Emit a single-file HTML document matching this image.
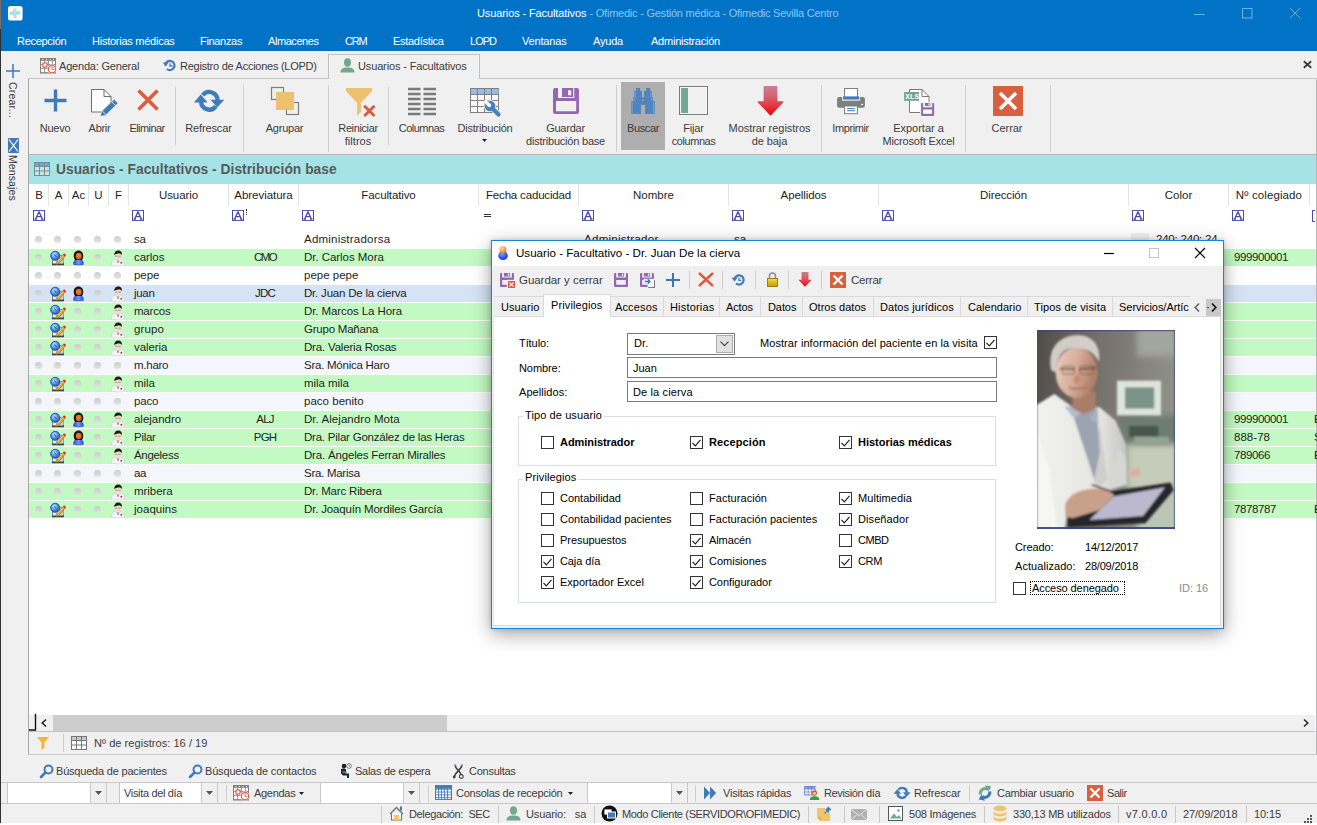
<!DOCTYPE html>
<html><head><meta charset="utf-8"><title>Usuarios - Facultativos</title>
<style>
*{box-sizing:border-box;margin:0;padding:0}
html,body{width:1317px;height:825px;overflow:hidden;background:#fff}
body{font-family:"Liberation Sans",sans-serif;font-size:11px;color:#3c3c3c;position:relative;letter-spacing:-0.2px}
.a{position:absolute;white-space:nowrap}
.c{position:absolute;white-space:nowrap;text-align:center;transform:translateX(-50%)}
svg{position:absolute;overflow:visible}
#title{left:0;top:0;width:1317px;height:51px;background:#0173c7}
.menu{color:#fff;top:35px;font-size:11px;line-height:13px}
#side{left:0;top:51px;width:28px;height:772px;background:#f0f0f0}
#main{left:28px;top:51px;width:1289px;height:772px;background:#f0f0f0}
.tl{top:122px;line-height:13px;font-size:11px;color:#3c3c3c}
.gsep{width:1px;background:#d0d0d0;top:85px;height:67px}
.isep{width:1px;background:#d0d0d0;top:87px;height:58px}
.g{font-size:11.5px;letter-spacing:0.1px;color:#1e1e1e;line-height:18px}
.hd{font-size:11.5px;letter-spacing:0.1px;color:#1e1e1e;top:189px;line-height:13px}
.row{left:29px;width:1287px;height:17px}
.d{font-size:11px;letter-spacing:0.080px;color:#000;line-height:13px}
.cb{width:13px;height:13px;border:1px solid #333;background:#fff}
.sb{top:808px;line-height:13px;color:#3c3c3c}
.ssep{width:1px;background:#c8c8c8;top:806px;height:17px}
.bt{top:787px;line-height:13px;color:#3c3c3c}
</style></head><body>
<!-- title bar -->
<div class="a" id="title"></div>
<div class="a" style="left:0;top:0;width:1px;height:29px;background:#7a6c62"></div>
<svg style="left:7.700px;top:5.500px" width="14.600" height="14.600" viewBox="0 0 14.600 14.600"><rect width="14.600" height="14.600" rx="2.600" fill="#fff"/><path d="M5.400 2.600h3.100v3h3.300v3.100H8.500v3.300H5.400V8.700H2.100V5.600h3.300z" fill="#9adbd6"/><path d="M5.400 4.100h3.100M5.400 5.600h3.100M5.400 7.200h3.100M5.400 8.700h3.100M5.400 10.300h3.100M6.900 2.600v9.400M3.600 5.600v3.100M10.200 5.600v3.100" stroke="#d4f0ee" stroke-width="0.500"/><rect x="11.300" y="4.600" width="0.900" height="1.500" fill="#7fcfca"/></svg>
<div class="a" style="left:477px;top:7px;color:#fff;font-size:11px;line-height:13px;letter-spacing:-0.11px">Usuarios - Facultativos</div>
<div class="a" style="left:589.500px;top:7px;color:#8fc6f0;font-size:11px;line-height:13px;letter-spacing:-0.23px">- Ofimedic - Gestión médica - Ofimedic Sevilla Centro</div>
<svg style="left:1194px;top:8px" width="112" height="12" viewBox="0 0 112 12"><path d="M0 6.500h10.500" stroke="#6fb2ea" stroke-width="1"/><rect x="48.500" y="0.500" width="9.500" height="9.500" fill="none" stroke="#6fb2ea"/><path d="M96 0l10.300 10.300M106.300 0l-10.300 10.300" stroke="#6fb2ea" stroke-width="1"/></svg>
<!-- menu -->
<div class="a menu" style="left:17px;letter-spacing:-0.29px">Recepción</div>
<div class="a menu" style="left:92px;letter-spacing:-0.25px">Historias médicas</div>
<div class="a menu" style="left:200px;letter-spacing:-0.32px">Finanzas</div>
<div class="a menu" style="left:268px;letter-spacing:-0.43px">Almacenes</div>
<div class="a menu" style="left:345px;letter-spacing:-1.18px">CRM</div>
<div class="a menu" style="left:393px;letter-spacing:-0.29px">Estadística</div>
<div class="a menu" style="left:470px;letter-spacing:-0.99px">LOPD</div>
<div class="a menu" style="left:522px;letter-spacing:-0.17px">Ventanas</div>
<div class="a menu" style="left:593px;letter-spacing:-0.2px">Ayuda</div>
<div class="a menu" style="left:651px;letter-spacing:-0.23px">Administración</div>
<!-- sidebar + main bg -->
<div class="a" id="side"></div>
<div class="a" id="main"></div>
<div class="a" style="left:0;top:29px;width:1px;height:794px;background:#303030"></div>
<div class="a" style="left:28px;top:78px;width:1px;height:676px;background:#a6a6a6"></div>
<svg style="left:6px;top:64px" width="14" height="14" viewBox="0 0 14 14"><path d="M7 0v14M0 7h14" stroke="#3d79b8" stroke-width="1.500"/></svg>
<div class="a" style="left:20px;top:82px;transform-origin:0 0;transform:rotate(90deg);font-size:10.500px;letter-spacing:0.200px;line-height:14px;color:#3c3c3c">Crear...</div>
<svg style="left:8px;top:138px" width="11" height="15" viewBox="0 0 11 15"><rect width="11" height="15" rx="0.800" fill="#4179b6"/><path d="M1 1.500l9 12M10 1.500l-9 12" stroke="#fff" stroke-width="1.200"/></svg>
<div class="a" style="left:20px;top:155px;transform-origin:0 0;transform:rotate(90deg);font-size:10.500px;letter-spacing:0.100px;line-height:14px;color:#3c3c3c">Mensajes</div>
<!-- doc tabs -->
<div class="a" style="left:1316px;top:78px;width:1px;height:76px;background:#b8b8b8"></div>
<div class="a" style="left:28px;top:78px;width:1289px;height:1px;background:#c6c6c6"></div>
<div class="a" style="left:328px;top:54px;width:152px;height:25px;background:#f0f0f0;border:1px solid #c2c2c2;border-bottom:none"></div>
<div class="a" style="left:59px;top:60px;line-height:13px;letter-spacing:-0.2px">Agenda: General</div>
<div class="a" style="left:180px;top:60px;line-height:13px;letter-spacing:-0.26px">Registro de Acciones (LOPD)</div>
<div class="a" style="left:358px;top:60px;line-height:13px;letter-spacing:-0.14px">Usuarios - Facultativos</div>
<svg style="left:1303px;top:61px" width="9" height="7" viewBox="0 0 9 7"><path d="M0.800 0.300l7.400 6.400M8.200 0.300l-7.400 6.400" stroke="#3a3a3a" stroke-width="1.800"/></svg>
<!-- toolbar separators -->
<div class="a isep" style="left:175px"></div>
<div class="a gsep" style="left:243px"></div>
<div class="a gsep" style="left:328px"></div>
<div class="a isep" style="left:388px"></div>
<div class="a gsep" style="left:616px"></div>
<div class="a gsep" style="left:821px"></div>
<div class="a gsep" style="left:965px"></div>
<div class="a gsep" style="left:1050px"></div>
<!-- Buscar pressed bg -->
<div class="a" style="left:621px;top:82px;width:44px;height:68px;background:#aeaeae"></div>
<!-- labels -->
<div class="c tl" style="left:55px;top:122px;letter-spacing:-0.24px">Nuevo</div>
<div class="c tl" style="left:99.500px;top:122px;letter-spacing:-0.28px">Abrir</div>
<div class="c tl" style="left:147px;top:122px;letter-spacing:-0.58px">Eliminar</div>
<div class="c tl" style="left:208.500px;top:122px;letter-spacing:-0.14px">Refrescar</div>
<div class="c tl" style="left:284.500px;top:122px;letter-spacing:-0.22px">Agrupar</div>
<div class="c tl" style="left:358px;top:122px;letter-spacing:-0.38px">Reiniciar</div>
<div class="c tl" style="left:358px;top:135px;letter-spacing:0.06px">filtros</div>
<div class="c tl" style="left:421.500px;top:122px;letter-spacing:-0.49px">Columnas</div>
<div class="c tl" style="left:485px;top:122px;letter-spacing:-0.2px">Distribución</div>
<svg style="left:482px;top:139px" width="5" height="3" viewBox="0 0 5 3"><path d="M0 0h5L2.500 3z" fill="#222"/></svg>
<div class="c tl" style="left:565.500px;top:122px;letter-spacing:-0.24px">Guardar</div>
<div class="c tl" style="left:565.500px;top:135px;letter-spacing:-0.21px">distribución base</div>
<div class="c tl" style="left:643px;top:122px;letter-spacing:-0.39px">Buscar</div>
<div class="c tl" style="left:693.500px;top:122px;letter-spacing:-0.17px">Fijar</div>
<div class="c tl" style="left:693.500px;top:135px;letter-spacing:-0.42px">columnas</div>
<div class="c tl" style="left:769.500px;top:122px;letter-spacing:-0.03px">Mostrar registros</div>
<div class="c tl" style="left:769.500px;top:135px;letter-spacing:-0.09px">de baja</div>
<div class="c tl" style="left:850.500px;top:122px;letter-spacing:-0.41px">Imprimir</div>
<div class="c tl" style="left:918.500px;top:122px;letter-spacing:0.0px">Exportar a</div>
<div class="c tl" style="left:918.500px;top:135px;letter-spacing:-0.16px">Microsoft Excel</div>
<div class="c tl" style="left:1007px;top:122px;letter-spacing:-0.06px">Cerrar</div>
<!-- icons -->
<!-- Nuevo -->
<svg style="left:44px;top:89px" width="23" height="23" viewBox="0 0 23 23"><path d="M11.500 0.500v22M0.500 11.500h22" stroke="#3f7ab9" stroke-width="3.400"/></svg>
<!-- Abrir -->
<svg style="left:90px;top:88px" width="28" height="29" viewBox="0 0 28 29"><path d="M1.500 1.500h12.500l7 7v6.500l-9.500 9h-10z" fill="#fff" stroke="#6e6e6e" stroke-width="1"/><path d="M14 1.500v7h7" fill="none" stroke="#6e6e6e" stroke-width="1"/><path d="M10.300 28.300l1.300-4.700 12.600-12.300 3.800 3.900-12.600 12.300z" fill="#3f7ab9" stroke="#f0f0f0" stroke-width="0.600"/><path d="M21.800 13.700l3.800 3.900M12.300 23l3.800 3.900" stroke="#f0f0f0" stroke-width="0.900"/></svg>
<!-- Eliminar -->
<svg style="left:137px;top:89px" width="22" height="22" viewBox="0 0 22 22"><path d="M1.500 1.500l19 19M20.500 1.500l-19 19" stroke="#dc5c3d" stroke-width="3.600"/></svg>
<!-- Refrescar -->
<svg style="left:193px;top:89px" width="32" height="24" viewBox="0 0 32 24"><path d="M9.800 6.200A8.200 8.200 0 0 1 24.500 11.300" fill="none" stroke="#3f7ab9" stroke-width="4.300"/><path d="M22.800 17.400A8.200 8.200 0 0 1 8.100 12.300" fill="none" stroke="#3f7ab9" stroke-width="4.300"/><path d="M17.500 10.700h13.800l-7 7.900z" fill="#3f7ab9"/><path d="M0.900 13.500h13.700L7.700 5.500z" fill="#3f7ab9"/></svg>
<!-- Agrupar -->
<svg style="left:271px;top:87px" width="29" height="28" viewBox="0 0 29 28"><rect x="0.500" y="0.500" width="12" height="12" fill="#f0f0f0" stroke="#7d7d7d" stroke-width="1.200"/><rect x="15.500" y="15.500" width="12" height="12" fill="#f0f0f0" stroke="#7d7d7d" stroke-width="1.200"/><rect x="5" y="5" width="18" height="18" fill="#eec16e"/></svg>
<!-- Reiniciar filtros -->
<svg style="left:345px;top:88px" width="31" height="29" viewBox="0 0 31 29"><path d="M0.900 0H27.100V3.100L15.900 15V24L12.100 27.700V15L0.900 3.100z" fill="#eec16e"/><path d="M19.200 17.700l10.300 10.300M29.500 17.700l-10.300 10.300" stroke="#dc5c3d" stroke-width="2.900"/></svg>
<!-- Columnas -->
<svg style="left:408px;top:88px" width="28" height="27" viewBox="0 0 28 27"><path d="M0 1h12.500M0 6h12.500M0 11h12.500M0 16h12.500M0 21h12.500M0 26h12.500M15.500 1H28M15.500 6H28M15.500 11H28M15.500 16H28M15.500 21H28M15.500 26H28" stroke="#7a7a7a" stroke-width="2.500"/></svg>
<!-- Distribucion -->
<svg style="left:470px;top:88px" width="32" height="30" viewBox="0 0 32 30"><rect x="0.500" y="0.500" width="28" height="24" fill="#fafafa" stroke="#808080"/><rect x="1" y="1" width="27.500" height="5.300" fill="#9dbbdc"/><path d="M0.500 6.500h28M0.500 12.500h28M0.500 18.500h28M7.500 0.500v24M14.500 0.500v24M21.500 0.500v24" stroke="#808080" stroke-width="1" fill="none"/>
<g stroke="#f0f0f0" stroke-width="1.600" fill="#f0f0f0"><circle cx="20" cy="18" r="5.300"/><path d="M21 19l7.500 7.500" stroke-width="5.800" stroke-linecap="round"/></g>
<circle cx="20" cy="18" r="5.300" fill="#4a80bb"/><path d="M21 19l7.500 7.500" stroke="#4a80bb" stroke-width="4.200" stroke-linecap="round"/><path d="M19.600 17.600L14.500 12.500" stroke="#f6f6f6" stroke-width="3.600"/><circle cx="19.300" cy="17.400" r="1.800" fill="#f6f6f6"/></svg>
<!-- Guardar distribucion base -->
<svg style="left:553px;top:88px" width="26" height="26" viewBox="0 0 26 26"><rect width="26" height="26" rx="2.200" fill="#9467b2"/><path d="M5 0h4v9h11.200V0h1.100v10H5zM3 13h20.200v10.200H3zM15 2.200h3.200v5H15z" fill="#f0f0f0"/></svg>
<!-- Buscar (binoculars) -->
<svg style="left:631px;top:88px" width="24" height="26" viewBox="0 0 24 26"><g fill="#4f84bd"><rect x="5.100" y="0" width="4" height="3.200"/><rect x="3.200" y="3" width="7.800" height="6.400"/><rect x="2.100" y="9.200" width="9.700" height="4"/><rect x="0.200" y="13" width="9.700" height="12.900"/><rect x="15" y="0" width="4.100" height="3.200"/><rect x="13.100" y="3" width="7.800" height="6.400"/><rect x="12.300" y="9.200" width="9.700" height="4"/><rect x="14.100" y="13" width="9.700" height="12.900"/><rect x="9.500" y="10" width="5" height="6.800"/></g><path d="M4.300 4v5M3.200 10v3M1.300 14v11M19.800 4v5M20.900 10v3M22.700 14v11" stroke="#9ab8dc" stroke-width="0.600"/><rect x="11" y="11.800" width="2" height="1" fill="#aeaeae"/></svg>
<!-- Fijar columnas -->
<svg style="left:679px;top:86px" width="29" height="29" viewBox="0 0 29 29"><rect x="0.500" y="0.500" width="28" height="28" fill="#fff" stroke="#7a7a7a"/><rect x="1.500" y="1.500" width="26" height="26" fill="#f0f0f0"/><rect x="2.100" y="2" width="6.900" height="25" fill="#76a796"/></svg>
<!-- Mostrar registros de baja -->
<svg style="left:756.500px;top:86px" width="27" height="30" viewBox="0 0 27 30"><defs><linearGradient id="rg" x1="0" y1="0" x2="0" y2="1"><stop offset="0" stop-color="#c8808f"/><stop offset="0.350" stop-color="#d8606e"/><stop offset="0.620" stop-color="#e3404a"/><stop offset="1" stop-color="#f00505"/></linearGradient></defs><path d="M7.300 0.800h12.400v15.200h6L13.500 28.700 1.300 16h6z" fill="url(#rg)" stroke="url(#rg)" stroke-width="1.400" stroke-linejoin="round"/></svg>
<!-- Imprimir -->
<svg style="left:836px;top:87px" width="30" height="28" viewBox="0 0 30 28"><rect x="1.100" y="10" width="27.800" height="10.700" rx="2" fill="#7f7f7f"/><rect x="6.100" y="9.500" width="18" height="4.200" fill="#f0f0f0"/><rect x="8.500" y="1.500" width="13" height="9.500" fill="#fff" stroke="#7f7f7f"/><rect x="7.100" y="9.400" width="16" height="3.100" fill="#3f7ab9"/><rect x="8.500" y="19" width="13" height="7.700" fill="#fff" stroke="#7f7f7f"/><path d="M11.100 21.600h7.800M11.100 23.700h7.800" stroke="#3f7ab9" stroke-width="1"/><rect x="25.100" y="16.900" width="2" height="1.100" fill="#fff"/></svg>
<!-- Exportar Excel -->
<svg style="left:903px;top:88px" width="32" height="29" viewBox="0 0 32 29"><path d="M6.500 1.500h12.500l7 7v16h-19.500z" fill="#fff" stroke="#7a7a7a"/><path d="M19 1.500v7h7" fill="none" stroke="#7a7a7a"/><rect x="1.100" y="4" width="14.900" height="8.800" fill="#6fa58f"/><text x="2.300" y="11.200" font-family="Liberation Mono,monospace" font-size="7.600" font-weight="bold" fill="#fff" letter-spacing="0">XLS</text><rect x="17.100" y="13.900" width="15" height="15" fill="#f0f0f0"/><g transform="translate(18.100,14.900) scale(0.930)"><rect width="14" height="14" rx="1" fill="#9467b2"/><path d="M2.200 0h1.800v3.400h6.100V0h1.800v4.600H2.200zM2.200 7h9.600v4.700H2.200zM7.900 0.600h1.300v2.200H7.900z" fill="#fff"/></g></svg>
<!-- Cerrar -->
<svg style="left:993px;top:86px" width="30" height="30" viewBox="0 0 30 30"><rect width="30" height="30" fill="#d9603f"/><path d="M7 7l16 16M23 7l-16 16" stroke="#fff" stroke-width="3.600"/></svg>
<!-- doc tab icons -->
<svg style="left:40px;top:58px" width="16" height="16" viewBox="0 0 16 16"><rect x="0.500" y="0.500" width="15" height="14.500" fill="#fff" stroke="#7d7d7d"/><rect x="0" y="0" width="16" height="2.800" fill="#7d7d7d"/><path d="M2.500 1.400h1M6 1.400h1M9.500 1.400h1M13 1.400h1" stroke="#fff" stroke-width="1"/><path d="M0.500 6.500h15M0.500 10.500h9M4.500 3v12M8.500 3v5M12.500 3v3.500M0.500 14.500h8" stroke="#8d8d8d" stroke-width="0.900" fill="none"/><rect x="3" y="5" width="4" height="4" fill="#fff" stroke="#e0533a" stroke-width="1.100"/><circle cx="12" cy="11.200" r="4.600" fill="#f0f0f0"/><circle cx="12" cy="11.200" r="3.600" fill="#fff" stroke="#e0533a" stroke-width="1.100"/><path d="M12 9v2.400h2" stroke="#e0533a" fill="none" stroke-width="0.900"/></svg>
<svg style="left:163px;top:59px" width="13" height="13" viewBox="0 0 13 13"><path d="M2.300 6.500a4.600 4.600 0 1 1 1.600 3.500" fill="none" stroke="#3f7ab9" stroke-width="2.200"/><path d="M-0.300 3.600h5.800l-2.600 4z" fill="#3f7ab9"/><path d="M7 4.200v2.800h2.400" fill="none" stroke="#3f7ab9" stroke-width="1.300"/></svg>
<svg style="left:340px;top:58px" width="15" height="15" viewBox="0 0 15 15"><ellipse cx="7.500" cy="4.500" rx="3.500" ry="4.200" fill="#72a792"/><path d="M0.500 14.500c0-4 3-5 7-5s7 1 7 5z" fill="#72a792"/></svg>
<div class="a" style="left:29px;top:154px;width:1287px;height:577px;background:#fff"></div>
<div class="a" style="left:1316px;top:154px;width:1px;height:600px;background:#b8b8b8"></div>
<div class="a" style="left:29px;top:155px;width:1287px;height:29px;background:#a6e3e6"></div><div class="a" style="left:28px;top:154px;width:1289px;height:1px;background:#b4b4b4"></div>
<svg style="left:34px;top:162px" width="16" height="14" viewBox="0 0 16 14"><rect x="0.500" y="0.500" width="15" height="13" fill="#bfeaec" stroke="#7d8a8c"/><rect x="1" y="1" width="14" height="3.500" fill="#6aa9d6"/><path d="M0.500 4.500h15M0.500 9h15M5.500 0.500v13M10.500 0.500v13" stroke="#7d8a8c" fill="none"/></svg>
<div class="a" style="left:56px;top:162px;font-weight:bold;font-size:13.800px;letter-spacing:0.020px;color:#5a5a5a;line-height:16px">Usuarios - Facultativos - Distribución base</div>
<div class="c hd" style="left:39.0px;letter-spacing:0px">B</div>
<div class="a" style="left:48px;top:184px;width:1px;height:22px;background:#e3e3e3"></div>
<div class="c hd" style="left:58.5px;letter-spacing:0px">A</div>
<div class="a" style="left:68px;top:184px;width:1px;height:22px;background:#e3e3e3"></div>
<div class="c hd" style="left:78.5px;letter-spacing:0px">Ac</div>
<div class="a" style="left:88px;top:184px;width:1px;height:22px;background:#e3e3e3"></div>
<div class="c hd" style="left:98.5px;letter-spacing:0px">U</div>
<div class="a" style="left:108px;top:184px;width:1px;height:22px;background:#e3e3e3"></div>
<div class="c hd" style="left:118.5px;letter-spacing:0px">F</div>
<div class="a" style="left:128px;top:184px;width:1px;height:22px;background:#e3e3e3"></div>
<div class="c hd" style="left:178.5px;letter-spacing:-0.07px">Usuario</div>
<div class="a" style="left:228px;top:184px;width:1px;height:22px;background:#e3e3e3"></div>
<div class="c hd" style="left:263.5px;letter-spacing:-0.03px">Abreviatura</div>
<div class="a" style="left:298px;top:184px;width:1px;height:22px;background:#e3e3e3"></div>
<div class="c hd" style="left:388.5px;letter-spacing:-0.12px">Facultativo</div>
<div class="a" style="left:478px;top:184px;width:1px;height:22px;background:#e3e3e3"></div>
<div class="c hd" style="left:528.5px;letter-spacing:-0.17px">Fecha caducidad</div>
<div class="a" style="left:578px;top:184px;width:1px;height:22px;background:#e3e3e3"></div>
<div class="c hd" style="left:653.5px;letter-spacing:0.02px">Nombre</div>
<div class="a" style="left:728px;top:184px;width:1px;height:22px;background:#e3e3e3"></div>
<div class="c hd" style="left:803.5px;letter-spacing:-0.09px">Apellidos</div>
<div class="a" style="left:878px;top:184px;width:1px;height:22px;background:#e3e3e3"></div>
<div class="c hd" style="left:1003.5px;letter-spacing:-0.12px">Dirección</div>
<div class="a" style="left:1128px;top:184px;width:1px;height:22px;background:#e3e3e3"></div>
<div class="c hd" style="left:1178.5px;letter-spacing:-0.02px">Color</div>
<div class="a" style="left:1228px;top:184px;width:1px;height:22px;background:#e3e3e3"></div>
<div class="c hd" style="left:1269.0px;letter-spacing:0.11px">Nº colegiado</div>
<div class="a" style="left:1309px;top:184px;width:1px;height:22px;background:#e3e3e3"></div>
<svg style="left:33px;top:209.500px" width="12" height="11" viewBox="0 0 12 12" preserveAspectRatio="none"><rect x="0.500" y="0.500" width="11" height="11" fill="#fff" stroke="#4b4ba8"/><path d="M2.500 10l3.500-8 3.500 8M3.800 7.200h4.400M1.500 10h2.500M8 10h2.500" stroke="#4b4ba8" fill="none" stroke-width="1.300"/></svg>
<svg style="left:132px;top:209.500px" width="12" height="11" viewBox="0 0 12 12" preserveAspectRatio="none"><rect x="0.500" y="0.500" width="11" height="11" fill="#fff" stroke="#4b4ba8"/><path d="M2.500 10l3.500-8 3.500 8M3.800 7.200h4.400M1.500 10h2.500M8 10h2.500" stroke="#4b4ba8" fill="none" stroke-width="1.300"/></svg>
<svg style="left:232px;top:209.500px" width="12" height="11" viewBox="0 0 12 12" preserveAspectRatio="none"><rect x="0.500" y="0.500" width="11" height="11" fill="#fff" stroke="#4b4ba8"/><path d="M2.500 10l3.500-8 3.500 8M3.800 7.200h4.400M1.500 10h2.500M8 10h2.500" stroke="#4b4ba8" fill="none" stroke-width="1.300"/></svg>
<svg style="left:302px;top:209.500px" width="12" height="11" viewBox="0 0 12 12" preserveAspectRatio="none"><rect x="0.500" y="0.500" width="11" height="11" fill="#fff" stroke="#4b4ba8"/><path d="M2.500 10l3.500-8 3.500 8M3.800 7.200h4.400M1.500 10h2.500M8 10h2.500" stroke="#4b4ba8" fill="none" stroke-width="1.300"/></svg>
<svg style="left:582px;top:209.500px" width="12" height="11" viewBox="0 0 12 12" preserveAspectRatio="none"><rect x="0.500" y="0.500" width="11" height="11" fill="#fff" stroke="#4b4ba8"/><path d="M2.500 10l3.500-8 3.500 8M3.800 7.200h4.400M1.500 10h2.500M8 10h2.500" stroke="#4b4ba8" fill="none" stroke-width="1.300"/></svg>
<svg style="left:732px;top:209.500px" width="12" height="11" viewBox="0 0 12 12" preserveAspectRatio="none"><rect x="0.500" y="0.500" width="11" height="11" fill="#fff" stroke="#4b4ba8"/><path d="M2.500 10l3.500-8 3.500 8M3.800 7.200h4.400M1.500 10h2.500M8 10h2.500" stroke="#4b4ba8" fill="none" stroke-width="1.300"/></svg>
<svg style="left:882px;top:209.500px" width="12" height="11" viewBox="0 0 12 12" preserveAspectRatio="none"><rect x="0.500" y="0.500" width="11" height="11" fill="#fff" stroke="#4b4ba8"/><path d="M2.500 10l3.500-8 3.500 8M3.800 7.200h4.400M1.500 10h2.500M8 10h2.500" stroke="#4b4ba8" fill="none" stroke-width="1.300"/></svg>
<svg style="left:1132px;top:209.500px" width="12" height="11" viewBox="0 0 12 12" preserveAspectRatio="none"><rect x="0.500" y="0.500" width="11" height="11" fill="#fff" stroke="#4b4ba8"/><path d="M2.500 10l3.500-8 3.500 8M3.800 7.200h4.400M1.500 10h2.500M8 10h2.500" stroke="#4b4ba8" fill="none" stroke-width="1.300"/></svg>
<svg style="left:1232px;top:209.500px" width="12" height="11" viewBox="0 0 12 12" preserveAspectRatio="none"><rect x="0.500" y="0.500" width="11" height="11" fill="#fff" stroke="#4b4ba8"/><path d="M2.500 10l3.500-8 3.500 8M3.800 7.200h4.400M1.500 10h2.500M8 10h2.500" stroke="#4b4ba8" fill="none" stroke-width="1.300"/></svg>
<div class="a" style="left:1312px;top:210px;width:3px;height:12px;border:1px solid #4b4ba8;border-right:none;background:#fff"></div>
<div class="a" style="left:246px;top:209px;width:1px;height:6px;border-left:1px dotted #333"></div>
<div class="a" style="left:484px;top:214px;width:7px;height:3px;border-top:1px solid #333;border-bottom:1px solid #333"></div>
<svg width="0" height="0" style="left:0;top:0"><defs><linearGradient id="dg" x1="0" y1="0" x2="0" y2="1"><stop offset="0" stop-color="#c8c8c8" stop-opacity="0.900"/><stop offset="1" stop-color="#e2e2e2" stop-opacity="0.900"/></linearGradient><filter id="db" x="-30%" y="-30%" width="160%" height="160%"><feGaussianBlur stdDeviation="0.500"/></filter><radialGradient id="gl" cx="0.400" cy="0.350" r="0.700"><stop offset="0" stop-color="#cfeaff"/><stop offset="0.550" stop-color="#4a90e8"/><stop offset="1" stop-color="#1a4fc0"/></radialGradient><radialGradient id="fc" cx="0.450" cy="0.400" r="0.700"><stop offset="0" stop-color="#f58a3a"/><stop offset="1" stop-color="#c04a10"/></radialGradient><linearGradient id="bd" x1="0" y1="0" x2="1" y2="0"><stop offset="0" stop-color="#2a4ae0"/><stop offset="0.500" stop-color="#6a9af8"/><stop offset="1" stop-color="#2a4ae0"/></linearGradient></defs></svg>
<svg style="left:34.0px;top:235px" width="9" height="9" viewBox="0 0 9 9"><circle cx="4.500" cy="4.500" r="3.600" fill="url(#dg)" filter="url(#db)"/></svg>
<svg style="left:52.8px;top:235px" width="9" height="9" viewBox="0 0 9 9"><circle cx="4.500" cy="4.500" r="3.600" fill="url(#dg)" filter="url(#db)"/></svg>
<svg style="left:72.5px;top:235px" width="9" height="9" viewBox="0 0 9 9"><circle cx="4.500" cy="4.500" r="3.600" fill="url(#dg)" filter="url(#db)"/></svg>
<svg style="left:93.0px;top:235px" width="9" height="9" viewBox="0 0 9 9"><circle cx="4.500" cy="4.500" r="3.600" fill="url(#dg)" filter="url(#db)"/></svg>
<svg style="left:113.0px;top:235px" width="9" height="9" viewBox="0 0 9 9"><circle cx="4.500" cy="4.500" r="3.600" fill="url(#dg)" filter="url(#db)"/></svg>
<div class="a g" style="left:134px;top:230px;letter-spacing:-0.37px">sa</div>
<div class="a g" style="left:304px;top:230px;letter-spacing:0.21px">Administradorsa</div>
<div class="a row" style="top:249px;background:#c3fac3"></div>
<svg style="left:34.0px;top:253px" width="9" height="9" viewBox="0 0 9 9"><circle cx="4.500" cy="4.500" r="3.600" fill="url(#dg)" filter="url(#db)"/></svg>
<svg style="left:93.0px;top:253px" width="9" height="9" viewBox="0 0 9 9"><circle cx="4.500" cy="4.500" r="3.600" fill="url(#dg)" filter="url(#db)"/></svg>
<svg style="left:49.5px;top:249.5px" width="16" height="16" viewBox="0 0 16 16"><rect x="2" y="5" width="12" height="10.300" fill="#2f4c4e"/><rect x="2.600" y="5.500" width="10.800" height="8" fill="#e6ecee"/><rect x="9" y="6" width="4.400" height="7" fill="#b9cfe0"/><circle cx="5.200" cy="5.800" r="4.500" fill="url(#gl)" stroke="#1d46b8" stroke-width="0.900"/><path d="M4.200 4.300l2.300 2.700" stroke="#3a6a5a" stroke-width="1.100"/><path d="M5.800 14.800l1-3.400 6.400-7 2 1.800-6.300 7.100z" fill="#e9a928" stroke="#8a5a10" stroke-width="0.500"/><path d="M8 11l5-5.500" stroke="#f8d878" stroke-width="0.800"/><path d="M13 4.600l1.100-1.300 2 1.800-1.100 1.300z" fill="#e02020"/></svg>
<svg style="left:72.8px;top:249.5px" width="11" height="15" viewBox="0 0 12 16"><path d="M0.600 15.500c0-4 1.500-5.500 5.400-5.500s5.400 1.500 5.400 5.500c-3 .8-7.800.8-10.800 0z" fill="url(#bd)" stroke="#1830a8" stroke-width="0.500"/><path d="M6 0.300c-3.200 0-5.200 2.500-5.200 5.700 0 2.200.6 3.800 1.500 4.800h7.400c.9-1 1.500-2.600 1.500-4.800 0-3.200-2-5.700-5.200-5.700z" fill="#161616"/><ellipse cx="6.300" cy="6.500" rx="3.300" ry="3.600" fill="url(#fc)"/></svg>
<svg style="left:110.5px;top:250px" width="14" height="16" viewBox="0 0 14 16"><g filter="url(#db)"><path d="M0.500 15.500c0-4.500 2-6.500 6.500-6.500s6.500 2 6.500 6.500c-3 .6-10 .6-13 0z" fill="#f3f4f5" stroke="#c9ccd0" stroke-width="0.600"/><ellipse cx="7" cy="5.600" rx="3.500" ry="4" fill="#f3d9c8"/><path d="M3.300 5.200c-.3-3 1.400-4.800 3.900-4.800s4.200 1.700 3.600 4.600c-.8-1.200-2-1.800-3.600-1.400-1.500.3-2.800.6-3.900 1.600z" fill="#1e1e1e"/><path d="M4.300 6.200h2.200M7.500 6.200h2.200" stroke="#777" stroke-width="0.700"/><path d="M6 10l1 3 1-3" fill="none" stroke="#8a9098" stroke-width="0.800"/></g><circle cx="10.300" cy="12.800" r="1" fill="#d83030"/></svg>
<div class="a g" style="left:134px;top:248px;letter-spacing:-0.05px">carlos</div>
<div class="c g" style="left:265px;top:248px;letter-spacing:-1.61px">CMO</div>
<div class="a g" style="left:304px;top:248px;letter-spacing:-0.05px">Dr. Carlos Mora</div>
<div class="a g" style="left:1234px;top:248px;letter-spacing:-0.39px">999900001</div>
<svg style="left:34.0px;top:271px" width="9" height="9" viewBox="0 0 9 9"><circle cx="4.500" cy="4.500" r="3.600" fill="url(#dg)" filter="url(#db)"/></svg>
<svg style="left:52.8px;top:271px" width="9" height="9" viewBox="0 0 9 9"><circle cx="4.500" cy="4.500" r="3.600" fill="url(#dg)" filter="url(#db)"/></svg>
<svg style="left:72.5px;top:271px" width="9" height="9" viewBox="0 0 9 9"><circle cx="4.500" cy="4.500" r="3.600" fill="url(#dg)" filter="url(#db)"/></svg>
<svg style="left:93.0px;top:271px" width="9" height="9" viewBox="0 0 9 9"><circle cx="4.500" cy="4.500" r="3.600" fill="url(#dg)" filter="url(#db)"/></svg>
<svg style="left:113.0px;top:271px" width="9" height="9" viewBox="0 0 9 9"><circle cx="4.500" cy="4.500" r="3.600" fill="url(#dg)" filter="url(#db)"/></svg>
<div class="a g" style="left:134px;top:266px;letter-spacing:-0.04px">pepe</div>
<div class="a g" style="left:304px;top:266px;letter-spacing:-0.0px">pepe pepe</div>
<div class="a row" style="top:285px;background:#d6e3f6"></div>
<svg style="left:34.0px;top:289px" width="9" height="9" viewBox="0 0 9 9"><circle cx="4.500" cy="4.500" r="3.600" fill="url(#dg)" filter="url(#db)"/></svg>
<svg style="left:93.0px;top:289px" width="9" height="9" viewBox="0 0 9 9"><circle cx="4.500" cy="4.500" r="3.600" fill="url(#dg)" filter="url(#db)"/></svg>
<svg style="left:49.5px;top:285.5px" width="16" height="16" viewBox="0 0 16 16"><rect x="2" y="5" width="12" height="10.300" fill="#2f4c4e"/><rect x="2.600" y="5.500" width="10.800" height="8" fill="#e6ecee"/><rect x="9" y="6" width="4.400" height="7" fill="#b9cfe0"/><circle cx="5.200" cy="5.800" r="4.500" fill="url(#gl)" stroke="#1d46b8" stroke-width="0.900"/><path d="M4.200 4.300l2.300 2.700" stroke="#3a6a5a" stroke-width="1.100"/><path d="M5.800 14.800l1-3.400 6.400-7 2 1.800-6.300 7.100z" fill="#e9a928" stroke="#8a5a10" stroke-width="0.500"/><path d="M8 11l5-5.500" stroke="#f8d878" stroke-width="0.800"/><path d="M13 4.600l1.100-1.300 2 1.800-1.100 1.300z" fill="#e02020"/></svg>
<svg style="left:72.8px;top:285.5px" width="11" height="15" viewBox="0 0 12 16"><path d="M0.600 15.500c0-4 1.500-5.500 5.400-5.500s5.400 1.500 5.400 5.500c-3 .8-7.800.8-10.800 0z" fill="url(#bd)" stroke="#1830a8" stroke-width="0.500"/><path d="M6 0.300c-3.200 0-5.200 2.500-5.200 5.700 0 2.200.6 3.800 1.500 4.800h7.400c.9-1 1.500-2.600 1.500-4.800 0-3.200-2-5.700-5.200-5.700z" fill="#161616"/><ellipse cx="6.300" cy="6.500" rx="3.300" ry="3.600" fill="url(#fc)"/></svg>
<svg style="left:110.5px;top:286px" width="14" height="16" viewBox="0 0 14 16"><g filter="url(#db)"><path d="M0.500 15.500c0-4.500 2-6.500 6.500-6.500s6.500 2 6.500 6.500c-3 .6-10 .6-13 0z" fill="#f3f4f5" stroke="#c9ccd0" stroke-width="0.600"/><ellipse cx="7" cy="5.600" rx="3.500" ry="4" fill="#f3d9c8"/><path d="M3.300 5.200c-.3-3 1.400-4.800 3.900-4.800s4.200 1.700 3.600 4.600c-.8-1.200-2-1.800-3.600-1.400-1.500.3-2.800.6-3.900 1.600z" fill="#1e1e1e"/><path d="M4.300 6.200h2.200M7.500 6.200h2.200" stroke="#777" stroke-width="0.700"/><path d="M6 10l1 3 1-3" fill="none" stroke="#8a9098" stroke-width="0.800"/></g><circle cx="10.300" cy="12.800" r="1" fill="#d83030"/></svg>
<div class="a g" style="left:134px;top:284px;letter-spacing:-0.31px">juan</div>
<div class="c g" style="left:265px;top:284px;letter-spacing:-0.79px">JDC</div>
<div class="a g" style="left:304px;top:284px;letter-spacing:-0.2px">Dr. Juan De la cierva</div>
<div class="a row" style="top:303px;background:#c3fac3"></div>
<svg style="left:34.0px;top:307px" width="9" height="9" viewBox="0 0 9 9"><circle cx="4.500" cy="4.500" r="3.600" fill="url(#dg)" filter="url(#db)"/></svg>
<svg style="left:72.5px;top:307px" width="9" height="9" viewBox="0 0 9 9"><circle cx="4.500" cy="4.500" r="3.600" fill="url(#dg)" filter="url(#db)"/></svg>
<svg style="left:93.0px;top:307px" width="9" height="9" viewBox="0 0 9 9"><circle cx="4.500" cy="4.500" r="3.600" fill="url(#dg)" filter="url(#db)"/></svg>
<svg style="left:49.5px;top:303.5px" width="16" height="16" viewBox="0 0 16 16"><rect x="2" y="5" width="12" height="10.300" fill="#2f4c4e"/><rect x="2.600" y="5.500" width="10.800" height="8" fill="#e6ecee"/><rect x="9" y="6" width="4.400" height="7" fill="#b9cfe0"/><circle cx="5.200" cy="5.800" r="4.500" fill="url(#gl)" stroke="#1d46b8" stroke-width="0.900"/><path d="M4.200 4.300l2.300 2.700" stroke="#3a6a5a" stroke-width="1.100"/><path d="M5.800 14.800l1-3.400 6.400-7 2 1.800-6.300 7.100z" fill="#e9a928" stroke="#8a5a10" stroke-width="0.500"/><path d="M8 11l5-5.500" stroke="#f8d878" stroke-width="0.800"/><path d="M13 4.600l1.100-1.300 2 1.800-1.100 1.300z" fill="#e02020"/></svg>
<svg style="left:110.5px;top:304px" width="14" height="16" viewBox="0 0 14 16"><g filter="url(#db)"><path d="M0.500 15.500c0-4.500 2-6.500 6.500-6.500s6.500 2 6.500 6.500c-3 .6-10 .6-13 0z" fill="#f3f4f5" stroke="#c9ccd0" stroke-width="0.600"/><ellipse cx="7" cy="5.600" rx="3.500" ry="4" fill="#f3d9c8"/><path d="M3.300 5.200c-.3-3 1.400-4.800 3.900-4.800s4.200 1.700 3.600 4.600c-.8-1.200-2-1.800-3.600-1.400-1.500.3-2.800.6-3.900 1.600z" fill="#1e1e1e"/><path d="M4.300 6.200h2.200M7.500 6.200h2.200" stroke="#777" stroke-width="0.700"/><path d="M6 10l1 3 1-3" fill="none" stroke="#8a9098" stroke-width="0.800"/></g><circle cx="10.300" cy="12.800" r="1" fill="#d83030"/></svg>
<div class="a g" style="left:134px;top:302px;letter-spacing:-0.21px">marcos</div>
<div class="a g" style="left:304px;top:302px;letter-spacing:-0.09px">Dr. Marcos La Hora</div>
<div class="a row" style="top:321px;background:#c3fac3"></div>
<svg style="left:34.0px;top:325px" width="9" height="9" viewBox="0 0 9 9"><circle cx="4.500" cy="4.500" r="3.600" fill="url(#dg)" filter="url(#db)"/></svg>
<svg style="left:72.5px;top:325px" width="9" height="9" viewBox="0 0 9 9"><circle cx="4.500" cy="4.500" r="3.600" fill="url(#dg)" filter="url(#db)"/></svg>
<svg style="left:93.0px;top:325px" width="9" height="9" viewBox="0 0 9 9"><circle cx="4.500" cy="4.500" r="3.600" fill="url(#dg)" filter="url(#db)"/></svg>
<svg style="left:49.5px;top:321.5px" width="16" height="16" viewBox="0 0 16 16"><rect x="2" y="5" width="12" height="10.300" fill="#2f4c4e"/><rect x="2.600" y="5.500" width="10.800" height="8" fill="#e6ecee"/><rect x="9" y="6" width="4.400" height="7" fill="#b9cfe0"/><circle cx="5.200" cy="5.800" r="4.500" fill="url(#gl)" stroke="#1d46b8" stroke-width="0.900"/><path d="M4.200 4.300l2.300 2.700" stroke="#3a6a5a" stroke-width="1.100"/><path d="M5.800 14.800l1-3.400 6.400-7 2 1.800-6.300 7.100z" fill="#e9a928" stroke="#8a5a10" stroke-width="0.500"/><path d="M8 11l5-5.500" stroke="#f8d878" stroke-width="0.800"/><path d="M13 4.600l1.100-1.300 2 1.800-1.100 1.300z" fill="#e02020"/></svg>
<svg style="left:110.5px;top:322px" width="14" height="16" viewBox="0 0 14 16"><g filter="url(#db)"><path d="M0.500 15.500c0-4.500 2-6.500 6.500-6.500s6.500 2 6.500 6.500c-3 .6-10 .6-13 0z" fill="#f3f4f5" stroke="#c9ccd0" stroke-width="0.600"/><ellipse cx="7" cy="5.600" rx="3.500" ry="4" fill="#f3d9c8"/><path d="M3.300 5.200c-.3-3 1.400-4.800 3.900-4.800s4.200 1.700 3.600 4.600c-.8-1.200-2-1.800-3.600-1.400-1.500.3-2.800.6-3.900 1.600z" fill="#1e1e1e"/><path d="M4.300 6.200h2.200M7.500 6.200h2.200" stroke="#777" stroke-width="0.700"/><path d="M6 10l1 3 1-3" fill="none" stroke="#8a9098" stroke-width="0.800"/></g><circle cx="10.300" cy="12.800" r="1" fill="#d83030"/></svg>
<div class="a g" style="left:134px;top:320px;letter-spacing:0.12px">grupo</div>
<div class="a g" style="left:304px;top:320px;letter-spacing:-0.22px">Grupo Mañana</div>
<div class="a row" style="top:339px;background:#c3fac3"></div>
<svg style="left:34.0px;top:343px" width="9" height="9" viewBox="0 0 9 9"><circle cx="4.500" cy="4.500" r="3.600" fill="url(#dg)" filter="url(#db)"/></svg>
<svg style="left:72.5px;top:343px" width="9" height="9" viewBox="0 0 9 9"><circle cx="4.500" cy="4.500" r="3.600" fill="url(#dg)" filter="url(#db)"/></svg>
<svg style="left:93.0px;top:343px" width="9" height="9" viewBox="0 0 9 9"><circle cx="4.500" cy="4.500" r="3.600" fill="url(#dg)" filter="url(#db)"/></svg>
<svg style="left:49.5px;top:339.5px" width="16" height="16" viewBox="0 0 16 16"><rect x="2" y="5" width="12" height="10.300" fill="#2f4c4e"/><rect x="2.600" y="5.500" width="10.800" height="8" fill="#e6ecee"/><rect x="9" y="6" width="4.400" height="7" fill="#b9cfe0"/><circle cx="5.200" cy="5.800" r="4.500" fill="url(#gl)" stroke="#1d46b8" stroke-width="0.900"/><path d="M4.200 4.300l2.300 2.700" stroke="#3a6a5a" stroke-width="1.100"/><path d="M5.800 14.800l1-3.400 6.400-7 2 1.800-6.300 7.100z" fill="#e9a928" stroke="#8a5a10" stroke-width="0.500"/><path d="M8 11l5-5.500" stroke="#f8d878" stroke-width="0.800"/><path d="M13 4.600l1.100-1.300 2 1.800-1.100 1.300z" fill="#e02020"/></svg>
<svg style="left:110.5px;top:340px" width="14" height="16" viewBox="0 0 14 16"><g filter="url(#db)"><path d="M0.500 15.500c0-4.500 2-6.500 6.500-6.500s6.500 2 6.500 6.500c-3 .6-10 .6-13 0z" fill="#f3f4f5" stroke="#c9ccd0" stroke-width="0.600"/><ellipse cx="7" cy="5.600" rx="3.500" ry="4" fill="#f3d9c8"/><path d="M3.300 5.200c-.3-3 1.400-4.800 3.900-4.800s4.200 1.700 3.600 4.600c-.8-1.200-2-1.800-3.600-1.400-1.500.3-2.800.6-3.900 1.600z" fill="#1e1e1e"/><path d="M4.300 6.200h2.200M7.500 6.200h2.200" stroke="#777" stroke-width="0.700"/><path d="M6 10l1 3 1-3" fill="none" stroke="#8a9098" stroke-width="0.800"/></g><circle cx="10.300" cy="12.800" r="1" fill="#d83030"/></svg>
<div class="a g" style="left:134px;top:338px;letter-spacing:-0.07px">valeria</div>
<div class="a g" style="left:304px;top:338px;letter-spacing:-0.18px">Dra. Valeria Rosas</div>
<div class="a row" style="top:357px;background:#f5f6fc"></div>
<svg style="left:34.0px;top:361px" width="9" height="9" viewBox="0 0 9 9"><circle cx="4.500" cy="4.500" r="3.600" fill="url(#dg)" filter="url(#db)"/></svg>
<svg style="left:52.8px;top:361px" width="9" height="9" viewBox="0 0 9 9"><circle cx="4.500" cy="4.500" r="3.600" fill="url(#dg)" filter="url(#db)"/></svg>
<svg style="left:72.5px;top:361px" width="9" height="9" viewBox="0 0 9 9"><circle cx="4.500" cy="4.500" r="3.600" fill="url(#dg)" filter="url(#db)"/></svg>
<svg style="left:93.0px;top:361px" width="9" height="9" viewBox="0 0 9 9"><circle cx="4.500" cy="4.500" r="3.600" fill="url(#dg)" filter="url(#db)"/></svg>
<svg style="left:113.0px;top:361px" width="9" height="9" viewBox="0 0 9 9"><circle cx="4.500" cy="4.500" r="3.600" fill="url(#dg)" filter="url(#db)"/></svg>
<div class="a g" style="left:134px;top:356px;letter-spacing:-0.26px">m.haro</div>
<div class="a g" style="left:304px;top:356px;letter-spacing:-0.25px">Sra. Mónica Haro</div>
<div class="a row" style="top:375px;background:#c3fac3"></div>
<svg style="left:34.0px;top:379px" width="9" height="9" viewBox="0 0 9 9"><circle cx="4.500" cy="4.500" r="3.600" fill="url(#dg)" filter="url(#db)"/></svg>
<svg style="left:72.5px;top:379px" width="9" height="9" viewBox="0 0 9 9"><circle cx="4.500" cy="4.500" r="3.600" fill="url(#dg)" filter="url(#db)"/></svg>
<svg style="left:93.0px;top:379px" width="9" height="9" viewBox="0 0 9 9"><circle cx="4.500" cy="4.500" r="3.600" fill="url(#dg)" filter="url(#db)"/></svg>
<svg style="left:49.5px;top:375.5px" width="16" height="16" viewBox="0 0 16 16"><rect x="2" y="5" width="12" height="10.300" fill="#2f4c4e"/><rect x="2.600" y="5.500" width="10.800" height="8" fill="#e6ecee"/><rect x="9" y="6" width="4.400" height="7" fill="#b9cfe0"/><circle cx="5.200" cy="5.800" r="4.500" fill="url(#gl)" stroke="#1d46b8" stroke-width="0.900"/><path d="M4.200 4.300l2.300 2.700" stroke="#3a6a5a" stroke-width="1.100"/><path d="M5.800 14.800l1-3.400 6.400-7 2 1.800-6.300 7.100z" fill="#e9a928" stroke="#8a5a10" stroke-width="0.500"/><path d="M8 11l5-5.500" stroke="#f8d878" stroke-width="0.800"/><path d="M13 4.600l1.100-1.300 2 1.800-1.100 1.300z" fill="#e02020"/></svg>
<svg style="left:110.5px;top:376px" width="14" height="16" viewBox="0 0 14 16"><g filter="url(#db)"><path d="M0.500 15.500c0-4.500 2-6.500 6.500-6.500s6.500 2 6.500 6.500c-3 .6-10 .6-13 0z" fill="#f3f4f5" stroke="#c9ccd0" stroke-width="0.600"/><ellipse cx="7" cy="5.600" rx="3.500" ry="4" fill="#f3d9c8"/><path d="M3.300 5.200c-.3-3 1.400-4.800 3.900-4.800s4.200 1.700 3.600 4.600c-.8-1.200-2-1.800-3.600-1.400-1.500.3-2.800.6-3.900 1.600z" fill="#1e1e1e"/><path d="M4.300 6.200h2.200M7.500 6.200h2.200" stroke="#777" stroke-width="0.700"/><path d="M6 10l1 3 1-3" fill="none" stroke="#8a9098" stroke-width="0.800"/></g><circle cx="10.300" cy="12.800" r="1" fill="#d83030"/></svg>
<div class="a g" style="left:134px;top:374px;letter-spacing:-0.05px">mila</div>
<div class="a g" style="left:304px;top:374px;letter-spacing:-0.06px">mila mila</div>
<div class="a row" style="top:393px;background:#f5f6fc"></div>
<svg style="left:34.0px;top:397px" width="9" height="9" viewBox="0 0 9 9"><circle cx="4.500" cy="4.500" r="3.600" fill="url(#dg)" filter="url(#db)"/></svg>
<svg style="left:52.8px;top:397px" width="9" height="9" viewBox="0 0 9 9"><circle cx="4.500" cy="4.500" r="3.600" fill="url(#dg)" filter="url(#db)"/></svg>
<svg style="left:72.5px;top:397px" width="9" height="9" viewBox="0 0 9 9"><circle cx="4.500" cy="4.500" r="3.600" fill="url(#dg)" filter="url(#db)"/></svg>
<svg style="left:93.0px;top:397px" width="9" height="9" viewBox="0 0 9 9"><circle cx="4.500" cy="4.500" r="3.600" fill="url(#dg)" filter="url(#db)"/></svg>
<svg style="left:113.0px;top:397px" width="9" height="9" viewBox="0 0 9 9"><circle cx="4.500" cy="4.500" r="3.600" fill="url(#dg)" filter="url(#db)"/></svg>
<div class="a g" style="left:134px;top:392px;letter-spacing:-0.16px">paco</div>
<div class="a g" style="left:304px;top:392px;letter-spacing:0.02px">paco benito</div>
<div class="a row" style="top:411px;background:#c3fac3"></div>
<svg style="left:34.0px;top:415px" width="9" height="9" viewBox="0 0 9 9"><circle cx="4.500" cy="4.500" r="3.600" fill="url(#dg)" filter="url(#db)"/></svg>
<svg style="left:93.0px;top:415px" width="9" height="9" viewBox="0 0 9 9"><circle cx="4.500" cy="4.500" r="3.600" fill="url(#dg)" filter="url(#db)"/></svg>
<svg style="left:49.5px;top:411.5px" width="16" height="16" viewBox="0 0 16 16"><rect x="2" y="5" width="12" height="10.300" fill="#2f4c4e"/><rect x="2.600" y="5.500" width="10.800" height="8" fill="#e6ecee"/><rect x="9" y="6" width="4.400" height="7" fill="#b9cfe0"/><circle cx="5.200" cy="5.800" r="4.500" fill="url(#gl)" stroke="#1d46b8" stroke-width="0.900"/><path d="M4.200 4.300l2.300 2.700" stroke="#3a6a5a" stroke-width="1.100"/><path d="M5.800 14.800l1-3.400 6.400-7 2 1.800-6.300 7.100z" fill="#e9a928" stroke="#8a5a10" stroke-width="0.500"/><path d="M8 11l5-5.500" stroke="#f8d878" stroke-width="0.800"/><path d="M13 4.600l1.100-1.300 2 1.800-1.100 1.300z" fill="#e02020"/></svg>
<svg style="left:72.8px;top:411.5px" width="11" height="15" viewBox="0 0 12 16"><path d="M0.600 15.500c0-4 1.500-5.500 5.400-5.500s5.400 1.500 5.400 5.500c-3 .8-7.800.8-10.800 0z" fill="url(#bd)" stroke="#1830a8" stroke-width="0.500"/><path d="M6 0.300c-3.200 0-5.200 2.500-5.200 5.700 0 2.200.6 3.800 1.500 4.800h7.400c.9-1 1.500-2.600 1.500-4.800 0-3.200-2-5.700-5.200-5.700z" fill="#161616"/><ellipse cx="6.300" cy="6.500" rx="3.300" ry="3.600" fill="url(#fc)"/></svg>
<svg style="left:110.5px;top:412px" width="14" height="16" viewBox="0 0 14 16"><g filter="url(#db)"><path d="M0.500 15.500c0-4.500 2-6.500 6.500-6.500s6.500 2 6.500 6.500c-3 .6-10 .6-13 0z" fill="#f3f4f5" stroke="#c9ccd0" stroke-width="0.600"/><ellipse cx="7" cy="5.600" rx="3.500" ry="4" fill="#f3d9c8"/><path d="M3.300 5.200c-.3-3 1.400-4.800 3.900-4.800s4.200 1.700 3.600 4.600c-.8-1.200-2-1.800-3.600-1.400-1.500.3-2.800.6-3.900 1.600z" fill="#1e1e1e"/><path d="M4.300 6.200h2.200M7.500 6.200h2.200" stroke="#777" stroke-width="0.700"/><path d="M6 10l1 3 1-3" fill="none" stroke="#8a9098" stroke-width="0.800"/></g><circle cx="10.300" cy="12.800" r="1" fill="#d83030"/></svg>
<div class="a g" style="left:134px;top:410px;letter-spacing:-0.03px">alejandro</div>
<div class="c g" style="left:265px;top:410px;letter-spacing:-0.77px">ALJ</div>
<div class="a g" style="left:304px;top:410px;letter-spacing:0.06px">Dr. Alejandro Mota</div>
<div class="a g" style="left:1234px;top:410px;letter-spacing:-0.39px">999900001</div>
<div class="a row" style="top:429px;background:#c3fac3"></div>
<svg style="left:34.0px;top:433px" width="9" height="9" viewBox="0 0 9 9"><circle cx="4.500" cy="4.500" r="3.600" fill="url(#dg)" filter="url(#db)"/></svg>
<svg style="left:93.0px;top:433px" width="9" height="9" viewBox="0 0 9 9"><circle cx="4.500" cy="4.500" r="3.600" fill="url(#dg)" filter="url(#db)"/></svg>
<svg style="left:49.5px;top:429.5px" width="16" height="16" viewBox="0 0 16 16"><rect x="2" y="5" width="12" height="10.300" fill="#2f4c4e"/><rect x="2.600" y="5.500" width="10.800" height="8" fill="#e6ecee"/><rect x="9" y="6" width="4.400" height="7" fill="#b9cfe0"/><circle cx="5.200" cy="5.800" r="4.500" fill="url(#gl)" stroke="#1d46b8" stroke-width="0.900"/><path d="M4.200 4.300l2.300 2.700" stroke="#3a6a5a" stroke-width="1.100"/><path d="M5.800 14.800l1-3.400 6.400-7 2 1.800-6.300 7.100z" fill="#e9a928" stroke="#8a5a10" stroke-width="0.500"/><path d="M8 11l5-5.500" stroke="#f8d878" stroke-width="0.800"/><path d="M13 4.600l1.100-1.300 2 1.800-1.100 1.300z" fill="#e02020"/></svg>
<svg style="left:72.8px;top:429.5px" width="11" height="15" viewBox="0 0 12 16"><path d="M0.600 15.500c0-4 1.500-5.500 5.400-5.500s5.400 1.500 5.400 5.500c-3 .8-7.800.8-10.800 0z" fill="url(#bd)" stroke="#1830a8" stroke-width="0.500"/><path d="M6 0.300c-3.200 0-5.200 2.500-5.200 5.700 0 2.200.6 3.800 1.500 4.800h7.400c.9-1 1.500-2.600 1.500-4.800 0-3.200-2-5.700-5.200-5.700z" fill="#161616"/><ellipse cx="6.300" cy="6.500" rx="3.300" ry="3.600" fill="url(#fc)"/></svg>
<svg style="left:110.5px;top:430px" width="14" height="16" viewBox="0 0 14 16"><g filter="url(#db)"><path d="M0.500 15.500c0-4.500 2-6.500 6.500-6.500s6.500 2 6.500 6.500c-3 .6-10 .6-13 0z" fill="#f3f4f5" stroke="#c9ccd0" stroke-width="0.600"/><ellipse cx="7" cy="5.600" rx="3.500" ry="4" fill="#f3d9c8"/><path d="M3.300 5.200c-.3-3 1.400-4.800 3.900-4.800s4.200 1.700 3.600 4.600c-.8-1.200-2-1.800-3.600-1.400-1.500.3-2.800.6-3.900 1.600z" fill="#1e1e1e"/><path d="M4.300 6.200h2.200M7.500 6.200h2.200" stroke="#777" stroke-width="0.700"/><path d="M6 10l1 3 1-3" fill="none" stroke="#8a9098" stroke-width="0.800"/></g><circle cx="10.300" cy="12.800" r="1" fill="#d83030"/></svg>
<div class="a g" style="left:134px;top:428px;letter-spacing:-0.28px">Pilar</div>
<div class="c g" style="left:265px;top:428px;letter-spacing:-0.84px">PGH</div>
<div class="a g" style="left:304px;top:428px;letter-spacing:-0.22px">Dra. Pilar González de las Heras</div>
<div class="a g" style="left:1234px;top:428px;letter-spacing:0.04px">888-78</div>
<div class="a row" style="top:447px;background:#c3fac3"></div>
<svg style="left:34.0px;top:451px" width="9" height="9" viewBox="0 0 9 9"><circle cx="4.500" cy="4.500" r="3.600" fill="url(#dg)" filter="url(#db)"/></svg>
<svg style="left:72.5px;top:451px" width="9" height="9" viewBox="0 0 9 9"><circle cx="4.500" cy="4.500" r="3.600" fill="url(#dg)" filter="url(#db)"/></svg>
<svg style="left:93.0px;top:451px" width="9" height="9" viewBox="0 0 9 9"><circle cx="4.500" cy="4.500" r="3.600" fill="url(#dg)" filter="url(#db)"/></svg>
<svg style="left:49.5px;top:447.5px" width="16" height="16" viewBox="0 0 16 16"><rect x="2" y="5" width="12" height="10.300" fill="#2f4c4e"/><rect x="2.600" y="5.500" width="10.800" height="8" fill="#e6ecee"/><rect x="9" y="6" width="4.400" height="7" fill="#b9cfe0"/><circle cx="5.200" cy="5.800" r="4.500" fill="url(#gl)" stroke="#1d46b8" stroke-width="0.900"/><path d="M4.200 4.300l2.300 2.700" stroke="#3a6a5a" stroke-width="1.100"/><path d="M5.800 14.800l1-3.400 6.400-7 2 1.800-6.300 7.100z" fill="#e9a928" stroke="#8a5a10" stroke-width="0.500"/><path d="M8 11l5-5.500" stroke="#f8d878" stroke-width="0.800"/><path d="M13 4.600l1.100-1.300 2 1.800-1.100 1.300z" fill="#e02020"/></svg>
<svg style="left:110.5px;top:448px" width="14" height="16" viewBox="0 0 14 16"><g filter="url(#db)"><path d="M0.500 15.500c0-4.500 2-6.500 6.500-6.500s6.500 2 6.500 6.500c-3 .6-10 .6-13 0z" fill="#f3f4f5" stroke="#c9ccd0" stroke-width="0.600"/><ellipse cx="7" cy="5.600" rx="3.500" ry="4" fill="#f3d9c8"/><path d="M3.300 5.200c-.3-3 1.400-4.800 3.900-4.800s4.200 1.700 3.600 4.600c-.8-1.200-2-1.800-3.600-1.400-1.500.3-2.800.6-3.900 1.600z" fill="#1e1e1e"/><path d="M4.300 6.200h2.200M7.500 6.200h2.200" stroke="#777" stroke-width="0.700"/><path d="M6 10l1 3 1-3" fill="none" stroke="#8a9098" stroke-width="0.800"/></g><circle cx="10.300" cy="12.800" r="1" fill="#d83030"/></svg>
<div class="a g" style="left:134px;top:446px;letter-spacing:-0.31px">Ángeless</div>
<div class="a g" style="left:304px;top:446px;letter-spacing:-0.18px">Dra. Ángeles Ferran Miralles</div>
<div class="a g" style="left:1234px;top:446px;letter-spacing:-0.39px">789066</div>
<div class="a row" style="top:465px;background:#f5f6fc"></div>
<svg style="left:34.0px;top:469px" width="9" height="9" viewBox="0 0 9 9"><circle cx="4.500" cy="4.500" r="3.600" fill="url(#dg)" filter="url(#db)"/></svg>
<svg style="left:52.8px;top:469px" width="9" height="9" viewBox="0 0 9 9"><circle cx="4.500" cy="4.500" r="3.600" fill="url(#dg)" filter="url(#db)"/></svg>
<svg style="left:72.5px;top:469px" width="9" height="9" viewBox="0 0 9 9"><circle cx="4.500" cy="4.500" r="3.600" fill="url(#dg)" filter="url(#db)"/></svg>
<svg style="left:93.0px;top:469px" width="9" height="9" viewBox="0 0 9 9"><circle cx="4.500" cy="4.500" r="3.600" fill="url(#dg)" filter="url(#db)"/></svg>
<svg style="left:113.0px;top:469px" width="9" height="9" viewBox="0 0 9 9"><circle cx="4.500" cy="4.500" r="3.600" fill="url(#dg)" filter="url(#db)"/></svg>
<div class="a g" style="left:134px;top:464px;letter-spacing:-0.49px">aa</div>
<div class="a g" style="left:304px;top:464px;letter-spacing:-0.27px">Sra. Marisa</div>
<div class="a row" style="top:483px;background:#c3fac3"></div>
<svg style="left:34.0px;top:487px" width="9" height="9" viewBox="0 0 9 9"><circle cx="4.500" cy="4.500" r="3.600" fill="url(#dg)" filter="url(#db)"/></svg>
<svg style="left:52.8px;top:487px" width="9" height="9" viewBox="0 0 9 9"><circle cx="4.500" cy="4.500" r="3.600" fill="url(#dg)" filter="url(#db)"/></svg>
<svg style="left:72.5px;top:487px" width="9" height="9" viewBox="0 0 9 9"><circle cx="4.500" cy="4.500" r="3.600" fill="url(#dg)" filter="url(#db)"/></svg>
<svg style="left:93.0px;top:487px" width="9" height="9" viewBox="0 0 9 9"><circle cx="4.500" cy="4.500" r="3.600" fill="url(#dg)" filter="url(#db)"/></svg>
<svg style="left:110.5px;top:484px" width="14" height="16" viewBox="0 0 14 16"><g filter="url(#db)"><path d="M0.500 15.500c0-4.500 2-6.500 6.500-6.500s6.500 2 6.500 6.500c-3 .6-10 .6-13 0z" fill="#f3f4f5" stroke="#c9ccd0" stroke-width="0.600"/><ellipse cx="7" cy="5.600" rx="3.500" ry="4" fill="#f3d9c8"/><path d="M3.300 5.200c-.3-3 1.400-4.800 3.900-4.800s4.200 1.700 3.600 4.600c-.8-1.200-2-1.800-3.600-1.400-1.500.3-2.800.6-3.900 1.600z" fill="#1e1e1e"/><path d="M4.300 6.200h2.200M7.500 6.200h2.200" stroke="#777" stroke-width="0.700"/><path d="M6 10l1 3 1-3" fill="none" stroke="#8a9098" stroke-width="0.800"/></g><circle cx="10.300" cy="12.800" r="1" fill="#d83030"/></svg>
<div class="a g" style="left:134px;top:482px;letter-spacing:-0.04px">mribera</div>
<div class="a g" style="left:304px;top:482px;letter-spacing:-0.18px">Dr. Marc Ribera</div>
<div class="a row" style="top:501px;background:#c3fac3"></div>
<svg style="left:34.0px;top:505px" width="9" height="9" viewBox="0 0 9 9"><circle cx="4.500" cy="4.500" r="3.600" fill="url(#dg)" filter="url(#db)"/></svg>
<svg style="left:72.5px;top:505px" width="9" height="9" viewBox="0 0 9 9"><circle cx="4.500" cy="4.500" r="3.600" fill="url(#dg)" filter="url(#db)"/></svg>
<svg style="left:93.0px;top:505px" width="9" height="9" viewBox="0 0 9 9"><circle cx="4.500" cy="4.500" r="3.600" fill="url(#dg)" filter="url(#db)"/></svg>
<svg style="left:49.5px;top:501.5px" width="16" height="16" viewBox="0 0 16 16"><rect x="2" y="5" width="12" height="10.300" fill="#2f4c4e"/><rect x="2.600" y="5.500" width="10.800" height="8" fill="#e6ecee"/><rect x="9" y="6" width="4.400" height="7" fill="#b9cfe0"/><circle cx="5.200" cy="5.800" r="4.500" fill="url(#gl)" stroke="#1d46b8" stroke-width="0.900"/><path d="M4.200 4.300l2.300 2.700" stroke="#3a6a5a" stroke-width="1.100"/><path d="M5.800 14.800l1-3.400 6.400-7 2 1.800-6.300 7.100z" fill="#e9a928" stroke="#8a5a10" stroke-width="0.500"/><path d="M8 11l5-5.500" stroke="#f8d878" stroke-width="0.800"/><path d="M13 4.600l1.100-1.300 2 1.800-1.100 1.300z" fill="#e02020"/></svg>
<svg style="left:110.5px;top:502px" width="14" height="16" viewBox="0 0 14 16"><g filter="url(#db)"><path d="M0.500 15.500c0-4.500 2-6.500 6.500-6.500s6.500 2 6.500 6.500c-3 .6-10 .6-13 0z" fill="#f3f4f5" stroke="#c9ccd0" stroke-width="0.600"/><ellipse cx="7" cy="5.600" rx="3.500" ry="4" fill="#f3d9c8"/><path d="M3.300 5.200c-.3-3 1.400-4.800 3.900-4.800s4.200 1.700 3.600 4.600c-.8-1.200-2-1.800-3.600-1.400-1.500.3-2.800.6-3.900 1.600z" fill="#1e1e1e"/><path d="M4.300 6.200h2.200M7.500 6.200h2.200" stroke="#777" stroke-width="0.700"/><path d="M6 10l1 3 1-3" fill="none" stroke="#8a9098" stroke-width="0.800"/></g><circle cx="10.300" cy="12.800" r="1" fill="#d83030"/></svg>
<div class="a g" style="left:134px;top:500px;letter-spacing:0.01px">joaquins</div>
<div class="a g" style="left:304px;top:500px;letter-spacing:-0.17px">Dr. Joaquín Mordiles García</div>
<div class="a g" style="left:1234px;top:500px;letter-spacing:-0.39px">7878787</div>
<div class="a g" style="left:584px;top:230px;letter-spacing:0.28px">Administrador</div>
<div class="a g" style="left:734px;top:230px">sa</div>
<div class="a" style="left:1131px;top:233px;width:18px;height:14px;background:#f0f0f0"></div>
<div class="a g" style="left:1156px;top:230px;letter-spacing:-0.21px">240; 240; 24</div>
<div class="a g" style="left:1314px;top:410px;width:3px;overflow:hidden">E</div>
<div class="a g" style="left:1314px;top:428px;width:3px;overflow:hidden">S</div>
<div class="a g" style="left:1314px;top:446px;width:3px;overflow:hidden">E</div>
<div class="a g" style="left:1314px;top:500px;width:3px;overflow:hidden">E</div>
<div class="a" style="left:29px;top:715px;width:1286px;height:16px;background:#f0f0f0"></div>
<div class="a" style="left:53px;top:715px;width:394px;height:16px;background:#cdcdcd"></div>
<svg style="left:29px;top:714px" width="8" height="17" viewBox="0 0 8 17"><path d="M6.500 0v16.500M0 16h7" stroke="#111" stroke-width="1.400" fill="none"/></svg>
<svg style="left:41px;top:719px" width="6" height="8" viewBox="0 0 6 8"><path d="M5 0.500L1.200 4 5 7.500" stroke="#222" stroke-width="1.500" fill="none"/></svg>
<svg style="left:1303px;top:719px" width="6" height="8" viewBox="0 0 6 8"><path d="M1 0.500L4.800 4 1 7.500" stroke="#222" stroke-width="1.500" fill="none"/></svg>
<div class="a" style="left:29px;top:731px;width:1286px;height:1px;background:#b4c6dc"></div>
<div class="a" style="left:29px;top:732px;width:1286px;height:22px;background:#f0f0f0"></div>
<div class="a" style="left:28px;top:754px;width:1289px;height:1px;background:#c6c6c6"></div>
<svg style="left:37px;top:737px" width="12" height="13" viewBox="0 0 12 13"><path d="M0 0h12L7.500 5.500v5L4.500 13V5.500z" fill="#f2b53a"/></svg>
<div class="a" style="left:63px;top:734px;width:1px;height:18px;background:#d0d0d0"></div>
<svg style="left:71px;top:736px" width="16" height="14" viewBox="0 0 16 14"><rect x="0.500" y="0.500" width="15" height="13" fill="#fff" stroke="#777"/><rect x="1" y="1" width="14" height="3.500" fill="#c8c8c8"/><path d="M0.500 4.500h15M0.500 9h15M5.500 0.500v13M10.500 0.500v13" stroke="#777" fill="none"/></svg>
<div class="a" style="left:94px;top:737px;line-height:13px;letter-spacing:0.05px">Nº de registros: 16 / 19</div>
<!-- search links row -->
<svg style="left:40px;top:764px" width="14" height="14" viewBox="0 0 14 14"><circle cx="8.500" cy="5.500" r="4" fill="#f0f0f0" stroke="#3f7ab9" stroke-width="2"/><path d="M5.500 8.500L1 13" stroke="#3f7ab9" stroke-width="2.600" stroke-linecap="round"/></svg>
<div class="a" style="left:56px;top:765px;line-height:13px;letter-spacing:-0.2px">Búsqueda de pacientes</div>
<svg style="left:189px;top:764px" width="14" height="14" viewBox="0 0 14 14"><circle cx="8.500" cy="5.500" r="4" fill="#f0f0f0" stroke="#3f7ab9" stroke-width="2"/><path d="M5.500 8.500L1 13" stroke="#3f7ab9" stroke-width="2.600" stroke-linecap="round"/></svg>
<div class="a" style="left:205px;top:765px;line-height:13px;letter-spacing:-0.17px">Búsqueda de contactos</div>
<svg style="left:338.500px;top:763px" width="13" height="16" viewBox="0 0 13 16"><circle cx="5" cy="3" r="2.300" fill="#222"/><path d="M2 6.500c0-1.500 5-1.500 5 0v4h3v4.500h-2v-2.500h-4l-2-2z" fill="#222"/><path d="M3.500 9l4 .5" stroke="#3f7ab9" stroke-width="2"/><circle cx="10" cy="3" r="2.300" fill="#fff" stroke="#555" stroke-width="0.800"/><path d="M10 1.800v1.400h1" stroke="#555" stroke-width="0.600" fill="none"/></svg>
<div class="a" style="left:355px;top:765px;line-height:13px;letter-spacing:-0.28px">Salas de espera</div>
<svg style="left:452px;top:764px" width="13" height="15" viewBox="0 0 13 15"><path d="M3.200 1.200c0 4 5.800 6 6 10.500" fill="none" stroke="#3a3a3a" stroke-width="1.500"/><path d="M9.800 1.200c0 4-5.200 5.500-7.300 10.800" fill="none" stroke="#3a3a3a" stroke-width="1.500"/><circle cx="3.200" cy="1.200" r="1" fill="#5a8ab0"/><circle cx="9.800" cy="1.200" r="1" fill="#5a8ab0"/><circle cx="9.300" cy="12.500" r="1.900" fill="#f0f0f0" stroke="#3a3a3a" stroke-width="1.100"/><circle cx="2.200" cy="13" r="1.400" fill="#3a3a3a"/></svg>
<div class="a" style="left:469px;top:765px;line-height:13px;letter-spacing:-0.26px">Consultas</div>
<!-- bottom toolbar -->
<div class="a" style="left:1px;top:782px;width:1316px;height:1px;background:#c8c8c8"></div>
<div class="a" style="left:1px;top:803px;width:1316px;height:1px;background:#c8c8c8"></div>
<div class="a" style="left:7px;top:783px;width:83px;height:20px;background:#fff;border-left:1px solid #c8c8c8"></div>
<div class="a" style="left:90px;top:783px;width:17px;height:20px;border-left:1px solid #c8c8c8;border-right:1px solid #c8c8c8"></div>
<svg style="left:95px;top:791px" width="7" height="4" viewBox="0 0 7 4"><path d="M0 0h7L3.500 4z" fill="#555"/></svg>
<div class="a" style="left:119px;top:783px;width:82px;height:20px;background:#fff;border-left:1px solid #c8c8c8"></div>
<div class="a bt" style="left:124px;letter-spacing:-0.34px">Visita del día</div>
<div class="a" style="left:201px;top:783px;width:17px;height:20px;border-left:1px solid #c8c8c8;border-right:1px solid #c8c8c8"></div>
<svg style="left:206px;top:791px" width="7" height="4" viewBox="0 0 7 4"><path d="M0 0h7L3.500 4z" fill="#555"/></svg>
<div class="a" style="left:226px;top:785px;width:1px;height:17px;background:#d0d0d0"></div>
<svg style="left:233px;top:785px" width="16" height="16" viewBox="0 0 16 16"><rect x="0.500" y="0.500" width="15" height="14.500" fill="#fff" stroke="#7d7d7d"/><rect x="0" y="0" width="16" height="2.800" fill="#7d7d7d"/><path d="M2.500 1.400h1M6 1.400h1M9.500 1.400h1M13 1.400h1" stroke="#fff" stroke-width="1"/><path d="M0.500 6.500h15M0.500 10.500h9M4.500 3v12M8.500 3v5M12.500 3v3.500M0.500 14.500h8" stroke="#8d8d8d" stroke-width="0.900" fill="none"/><rect x="3" y="5" width="4" height="4" fill="#fff" stroke="#e0533a" stroke-width="1.100"/><circle cx="12" cy="11.200" r="4.600" fill="#f0f0f0"/><circle cx="12" cy="11.200" r="3.600" fill="#fff" stroke="#e0533a" stroke-width="1.100"/><path d="M12 9v2.400h2" stroke="#e0533a" fill="none" stroke-width="0.900"/></svg>
<div class="a bt" style="left:254px;letter-spacing:-0.3px">Agendas</div>
<svg style="left:299px;top:792px" width="5" height="3" viewBox="0 0 5 3"><path d="M0 0h5L2.500 3z" fill="#222"/></svg>
<div class="a" style="left:320px;top:783px;width:83px;height:20px;background:#fff;border-left:1px solid #c8c8c8"></div>
<div class="a" style="left:403px;top:783px;width:17px;height:20px;border-left:1px solid #c8c8c8;border-right:1px solid #c8c8c8"></div>
<svg style="left:408px;top:791px" width="7" height="4" viewBox="0 0 7 4"><path d="M0 0h7L3.500 4z" fill="#555"/></svg>
<div class="a" style="left:428px;top:785px;width:1px;height:17px;background:#d0d0d0"></div>
<svg style="left:435px;top:785px" width="17" height="15" viewBox="0 0 17 16" preserveAspectRatio="none"><rect x="0.500" y="0.500" width="16" height="15" fill="#fff" stroke="#3f7ab9"/><rect x="1" y="1" width="15" height="3" fill="#3f7ab9"/><path d="M0.500 4.500h16M0.500 7.500h16M0.500 10.500h16M0.500 13.500h16M3.500 1v14M6.500 1v14M9.500 1v14M12.500 1v14" stroke="#3f7ab9" stroke-width="0.900" fill="none"/></svg>
<div class="a bt" style="left:456px;letter-spacing:-0.26px">Consolas de recepción</div>
<svg style="left:568px;top:792px" width="5" height="3" viewBox="0 0 5 3"><path d="M0 0h5L2.500 3z" fill="#222"/></svg>
<div class="a" style="left:587px;top:783px;width:84px;height:20px;background:#fff;border-left:1px solid #c8c8c8"></div>
<div class="a" style="left:671px;top:783px;width:17px;height:20px;border-left:1px solid #c8c8c8;border-right:1px solid #c8c8c8"></div>
<svg style="left:676px;top:791px" width="7" height="4" viewBox="0 0 7 4"><path d="M0 0h7L3.500 4z" fill="#555"/></svg>
<div class="a" style="left:695px;top:785px;width:1px;height:17px;background:#d0d0d0"></div>
<svg style="left:704px;top:786px" width="13" height="14" viewBox="0 0 14 14"><path d="M0 0l6.500 7L0 14zM6.500 0L13 7l-6.500 7z" fill="#3f7ab9"/></svg>
<div class="a bt" style="left:723px;letter-spacing:-0.21px">Visitas rápidas</div>
<svg style="left:804px;top:786px" width="16" height="14.500" viewBox="0 0 18 17"><rect x="0.500" y="0.500" width="12" height="10" fill="#fff" stroke="#5a6fc0"/><rect x="1" y="1" width="11" height="2.500" fill="#8fa2e0"/><path d="M0.500 3.500h12M0.500 7h12M4.500 0.500v10M8.500 0.500v10" stroke="#5a6fc0" stroke-width="0.800"/><circle cx="12" cy="8" r="3" fill="#b5651d"/><path d="M6.500 16.500c0-3.500 2-4.500 5.500-4.500s5.500 1 5.500 4.500z" fill="#3aa03a"/><circle cx="12" cy="8.500" r="1.800" fill="#f2c29a"/></svg>
<div class="a bt" style="left:824px;letter-spacing:-0.35px">Revisión día</div>
<svg style="left:893px;top:786px" width="18" height="14" viewBox="0 0 32 24"><path d="M9.800 6.200A8.200 8.200 0 0 1 24.500 11.300" fill="none" stroke="#3f7ab9" stroke-width="4.300"/><path d="M22.800 17.400A8.200 8.200 0 0 1 8.100 12.300" fill="none" stroke="#3f7ab9" stroke-width="4.300"/><path d="M17.500 10.700h13.800l-7 7.900z" fill="#3f7ab9"/><path d="M0.900 13.500h13.700L7.700 5.500z" fill="#3f7ab9"/></svg>
<div class="a bt" style="left:914px;letter-spacing:-0.14px">Refrescar</div>
<div class="a" style="left:969px;top:785px;width:1px;height:17px;background:#d0d0d0"></div>
<svg style="left:978px;top:785px" width="14" height="16" viewBox="0 0 14 16"><path d="M2.300 9.500a5 5 0 0 1 7.200-5.300" fill="none" stroke="#72a792" stroke-width="3"/><path d="M11.700 6.500a5 5 0 0 1-7.200 5.300" fill="none" stroke="#3f7ab9" stroke-width="3"/><path d="M7 0.300l6.300 1.200-3 5.500z" fill="#72a792"/><path d="M7 15.700l-6.300-1.200 3-5.500z" fill="#3f7ab9"/></svg>
<div class="a bt" style="left:997px;letter-spacing:-0.26px">Cambiar usuario</div>
<svg style="left:1087px;top:785px" width="16" height="16" viewBox="0 0 16 16"><rect width="16" height="16" fill="#d9603f"/><path d="M3.500 3.500l9 9M12.500 3.500l-9 9" stroke="#fff" stroke-width="2.400"/></svg>
<div class="a bt" style="left:1107px;letter-spacing:-0.46px">Salir</div>
<!-- status bar -->
<div class="a ssep" style="left:381px"></div>
<svg style="left:389px;top:806px" width="15" height="15" viewBox="0 0 15 15"><path d="M1 8L7.500 1.500 14 8" fill="none" stroke="#777" stroke-width="1.500"/><path d="M2.500 7.500v6.500h10v-6.500" fill="#fff" stroke="#777" stroke-width="1.200"/><rect x="5" y="9" width="5" height="5" fill="#f0c36e"/><rect x="11" y="0.500" width="2" height="4" fill="#3f7ab9"/></svg>
<div class="a sb" style="left:409px;letter-spacing:-0.37px">Delegación:&nbsp; SEC</div>
<div class="a ssep" style="left:498px"></div>
<svg style="left:506px;top:806px" width="15" height="15" viewBox="0 0 15 15"><ellipse cx="7.500" cy="4.500" rx="3.500" ry="4.200" fill="#72a792"/><path d="M0.500 14.500c0-4 3-5 7-5s7 1 7 5z" fill="#72a792"/></svg>
<div class="a sb" style="left:526px;letter-spacing:-0.12px">Usuario:&nbsp;&nbsp; sa</div>
<div class="a ssep" style="left:594px"></div>
<svg style="left:601px;top:805px" width="17" height="17" viewBox="0 0 17 17"><circle cx="8.500" cy="8.500" r="8" fill="#111"/><rect x="3" y="4" width="8" height="6" fill="#fff" stroke="#111" stroke-width="0.800"/><rect x="6.500" y="7" width="8" height="6" fill="#3f7ab9" stroke="#fff" stroke-width="1"/></svg>
<div class="a sb" style="left:622px;letter-spacing:-0.35px">Modo Cliente (SERVIDOR\OFIMEDIC)</div>
<div class="a ssep" style="left:808px"></div>
<svg style="left:817px;top:806px" width="15" height="15" viewBox="0 0 16 16"><path d="M0 2h9v5h5v9H4l-4-4z" fill="#f0c36e"/><path d="M0 12h4v4z" fill="#d8a84a"/><path d="M9 4l3-3.500 3.500 3.500-2 .5-1.500 3z" fill="#3f7ab9"/><path d="M10.500 5.500L8 8" stroke="#3f7ab9" stroke-width="1.200"/></svg>
<div class="a ssep" style="left:844px"></div>
<svg style="left:851px;top:809px" width="16" height="11" viewBox="0 0 16 11"><rect width="16" height="11" fill="#b0b0b0"/><path d="M0 0l8 6.500L16 0M0 11l6-5.500M16 11l-6-5.500" stroke="#e6e6e6" stroke-width="1" fill="none"/></svg>
<div class="a ssep" style="left:879px"></div>
<svg style="left:888px;top:806px" width="15" height="15" viewBox="0 0 15 15"><rect x="0.500" y="0.500" width="14" height="14" fill="#fff" stroke="#555"/><path d="M2 12.500l4-5 3 3.500 2-2 2.500 3.500z" fill="#72a792"/><circle cx="10.500" cy="4.500" r="1.300" fill="#72a792"/></svg>
<div class="a sb" style="left:909px;letter-spacing:-0.22px">508 Imágenes</div>
<div class="a ssep" style="left:984px"></div>
<svg style="left:993px;top:805px" width="14" height="17" viewBox="0 0 14 17"><ellipse cx="7" cy="3.500" rx="6.500" ry="3" fill="#f0c36e"/><path d="M0.500 5.500c0 4 13 4 13 0v3c0 4-13 4-13 0zM0.500 10.500c0 4 13 4 13 0v3c0 4-13 4-13 0z" fill="#f0c36e"/></svg>
<div class="a sb" style="left:1013px;letter-spacing:-0.22px">330,13 MB utilizados</div>
<div class="a ssep" style="left:1118px"></div>
<div class="a sb" style="left:1126px;letter-spacing:0.29px">v7.0.0.0</div>
<div class="a ssep" style="left:1175px"></div>
<div class="a sb" style="left:1183px;letter-spacing:-0.06px">27/09/2018</div>
<div class="a ssep" style="left:1246px"></div>
<div class="a sb" style="left:1254px;letter-spacing:-0.13px">10:15</div>
<svg style="left:1304px;top:815px" width="8" height="8" viewBox="0 0 8 8"><path d="M6 0h2v2h-2zM3 3h2v2h-2zM6 3h2v2h-2zM0 6h2v2h-2zM3 6h2v2h-2zM6 6h2v2h-2z" fill="#555"/></svg>
<div class="a" style="left:0;top:823px;width:1317px;height:2px;background:#fff"></div>
<!-- dialog -->
<div class="a" style="left:491px;top:240px;width:733px;height:389px;background:#f0f0f0;border:1px solid #1a84d8;box-shadow:0 5px 18px rgba(0,0,0,0.36),0 0 4px rgba(0,0,0,0.18)"></div>
<div class="a" style="left:492px;top:241px;width:731px;height:25px;background:#fff"></div>
<svg style="left:498px;top:246px" width="10" height="14" viewBox="0 0 12 17"><defs><radialGradient id="uh" cx="0.400" cy="0.350" r="0.700"><stop offset="0" stop-color="#ffd8a0"/><stop offset="1" stop-color="#f27410"/></radialGradient><radialGradient id="ub" cx="0.400" cy="0.300" r="0.800"><stop offset="0" stop-color="#7a9cff"/><stop offset="1" stop-color="#0a1ee6"/></radialGradient></defs><ellipse cx="6" cy="11.700" rx="5.800" ry="5.300" fill="url(#ub)"/><circle cx="6" cy="4.500" r="4.200" fill="url(#uh)"/></svg>
<div class="a" style="left:516px;top:246px;font-size:11.600px;color:#000;line-height:14px;letter-spacing:0.0px">Usuario - Facultativo - Dr. Juan De la cierva</div>
<svg style="left:1104px;top:247px" width="102" height="12" viewBox="0 0 102 12"><path d="M0 6.500h10" stroke="#000" stroke-width="1.200"/><rect x="45.500" y="1.500" width="9" height="9" fill="none" stroke="#c4c4c4"/><path d="M91 1l10 10M101 1l-10 10" stroke="#000" stroke-width="1.200"/></svg>
<!-- dialog toolbar -->
<svg style="left:500px;top:273px" width="15" height="15" viewBox="0 0 15 15"><rect width="14" height="14" rx="1" fill="#9467b2"/><path d="M2.200 0h1.800v3.400h6.100V0h1.800v4.600H2.200zM2.200 7h9.600v4.700H2.200zM7.900 0.600h1.300v2.200H7.900z" fill="#f0f0f0"/><rect x="6.800" y="6.800" width="9" height="9" fill="#f0f0f0"/><rect x="8" y="8" width="7" height="7" fill="#dc5c3d"/><path d="M9.300 9.300l4.400 4.400M13.700 9.300l-4.400 4.400" stroke="#fff" stroke-width="1.200"/></svg>
<div class="a" style="left:519px;top:273px;font-size:11.500px;color:#3c3c3c;line-height:14px;letter-spacing:-0.04px">Guardar y cerrar</div>
<svg style="left:614px;top:273px" width="14" height="14" viewBox="0 0 14 14"><rect width="14" height="14" rx="1" fill="#9467b2"/><path d="M2.200 0h1.800v3.400h6.100V0h1.800v4.600H2.200zM2.200 7h9.600v4.700H2.200zM7.900 0.600h1.300v2.200H7.900z" fill="#f0f0f0"/></svg>
<svg style="left:640px;top:273px" width="16" height="15" viewBox="0 0 16 15"><rect width="14" height="14" rx="1" fill="#9467b2"/><path d="M2.200 0h1.800v3.400h6.100V0h1.800v4.600H2.200zM2.200 7h9.600v4.700H2.200zM7.900 0.600h1.300v2.200H7.900z" fill="#f0f0f0"/><rect x="3.500" y="5.800" width="11" height="4.800" fill="#f0f0f0"/><rect x="7.500" y="6.500" width="8" height="8.500" fill="#f0f0f0"/><path d="M9 7.500h5.500v7H8.500v-2" fill="#fff" stroke="#777" stroke-width="1"/><rect x="8" y="7" width="6" height="7" fill="#fff"/><path d="M14.500 7.500v7H8.500" fill="none" stroke="#777" stroke-width="1"/><path d="M4.800 8.500h5M7.800 6.200l2.300 2.300-2.300 2.300" stroke="#3f7ab9" stroke-width="1.300" fill="none"/></svg>
<svg style="left:666px;top:273px" width="14" height="14" viewBox="0 0 14 14"><path d="M7 0v14M0 7h14" stroke="#3a75b5" stroke-width="2"/></svg>
<div class="a" style="left:689px;top:271px;width:1px;height:18px;background:#cfcfcf"></div>
<svg style="left:698px;top:272px" width="16" height="15" viewBox="0 0 16 15"><path d="M1 1l14 13M15 1L1 14" stroke="#dc5c3d" stroke-width="2.400"/></svg>
<div class="a" style="left:722px;top:271px;width:1px;height:18px;background:#cfcfcf"></div>
<svg style="left:732px;top:274px" width="13" height="12" viewBox="0 0 14 13"><path d="M2.600 6.500a5 5 0 1 1 1.700 3.700" fill="none" stroke="#3f7ab9" stroke-width="2.400"/><path d="M-0.500 4h6.500l-3.200 4z" fill="#3f7ab9"/><path d="M7.500 4v3h2.500" fill="none" stroke="#3f7ab9" stroke-width="1.400"/></svg>
<div class="a" style="left:755px;top:271px;width:1px;height:18px;background:#cfcfcf"></div>
<svg style="left:767px;top:272px" width="11" height="15" viewBox="0 0 11 15"><defs><linearGradient id="lk" x1="0" y1="0" x2="0" y2="1"><stop offset="0" stop-color="#f6dc48"/><stop offset="1" stop-color="#c99a00"/></linearGradient></defs><path d="M2.500 7v-3a3 3 0 0 1 6 0v3" fill="none" stroke="#8e8e8e" stroke-width="1.600"/><rect x="0.500" y="6.500" width="10" height="8" fill="url(#lk)" stroke="#8a6a00" stroke-width="0.800"/></svg>
<div class="a" style="left:788px;top:271px;width:1px;height:18px;background:#cfcfcf"></div>
<svg style="left:798px;top:272px" width="14" height="15" viewBox="0 0 27 30"><path d="M6.500 0h14v15.500h6.500L13.500 29.500 0 15.500h6.500z" fill="url(#rg)"/></svg>
<div class="a" style="left:821px;top:271px;width:1px;height:18px;background:#cfcfcf"></div>
<svg style="left:830px;top:272px" width="16" height="16" viewBox="0 0 16 16"><rect width="16" height="16" fill="#d9603f"/><path d="M3.500 3.500l9 9M12.500 3.500l-9 9" stroke="#fff" stroke-width="2.400"/></svg>
<div class="a" style="left:851px;top:273px;font-size:11.500px;color:#3c3c3c;line-height:14px;letter-spacing:-0.23px">Cerrar</div>
<!-- tab strip -->
<div class="a" style="left:494px;top:296px;width:696px;height:21px;background:#f0f0f0;border-top:1px solid #d9d9d9;border-bottom:1px solid #d9d9d9"></div>
<div class="a" style="left:493px;top:317px;width:728px;height:309px;background:#fff;border-right:1px solid #dcdcdc;border-bottom:1px solid #dcdcdc;border-left:1px solid #e6e6e6"></div>
<div class="a" style="left:494px;top:316px;width:727px;height:1px;background:#d9d9d9"></div>
<div class="a" style="left:543px;top:294px;width:68px;height:23px;background:#fff;border:1px solid #d9d9d9;border-bottom:none"></div>
<div class="a" style="left:663px;top:297px;width:1px;height:19px;background:#d9d9d9"></div>
<div class="a" style="left:719px;top:297px;width:1px;height:19px;background:#d9d9d9"></div>
<div class="a" style="left:760px;top:297px;width:1px;height:19px;background:#d9d9d9"></div>
<div class="a" style="left:802px;top:297px;width:1px;height:19px;background:#d9d9d9"></div>
<div class="a" style="left:873px;top:297px;width:1px;height:19px;background:#d9d9d9"></div>
<div class="a" style="left:960px;top:297px;width:1px;height:19px;background:#d9d9d9"></div>
<div class="a" style="left:1027px;top:297px;width:1px;height:19px;background:#d9d9d9"></div>
<div class="a" style="left:1112px;top:297px;width:1px;height:19px;background:#d9d9d9"></div>
<div class="a d" style="left:501px;top:301px;letter-spacing:0.06px">Usuario</div>
<div class="a d" style="left:551px;top:299px;letter-spacing:0.12px">Privilegios</div>
<div class="a d" style="left:615px;top:301px;letter-spacing:0.14px">Accesos</div>
<div class="a d" style="left:670px;top:301px;letter-spacing:0.18px">Historias</div>
<div class="a d" style="left:726px;top:301px;letter-spacing:-0.11px">Actos</div>
<div class="a d" style="left:768px;top:301px;letter-spacing:-0.09px">Datos</div>
<div class="a d" style="left:809px;top:301px;letter-spacing:0.02px">Otros datos</div>
<div class="a d" style="left:880px;top:301px;letter-spacing:0.07px">Datos jurídicos</div>
<div class="a d" style="left:968px;top:301px;letter-spacing:0.02px">Calendario</div>
<div class="a d" style="left:1034px;top:301px;letter-spacing:0.15px">Tipos de visita</div>
<div class="a d" style="left:1119px;top:301px;width:70px;overflow:hidden;letter-spacing:-0.030px">Servicios/Artículos</div>
<svg style="left:1194px;top:303px" width="6" height="9" viewBox="0 0 6 9"><path d="M5 0.500L1.200 4.500 5 8.500" stroke="#666" stroke-width="1.700" fill="none"/></svg>
<div class="a" style="left:1206px;top:299px;width:15px;height:17px;background:#c8c8c8"></div>
<svg style="left:1211px;top:303px" width="6" height="9" viewBox="0 0 6 9"><path d="M1 0.500L4.800 4.500 1 8.500" stroke="#111" stroke-width="1.700" fill="none"/></svg>
<div class="a" style="left:1207px;top:307px;width:2px;height:1px;background:#555"></div>
<!-- form -->
<div class="a d" style="left:519px;top:337px;letter-spacing:-0.08px">Título:</div>
<div class="a" style="left:627px;top:333px;width:108px;height:22px;background:#fff;border:1px solid #7a7a7a"></div>
<div class="a" style="left:716px;top:335px;width:17px;height:18px;background:#e1e1e1;border:1px solid #adadad"></div>
<svg style="left:720px;top:341px" width="9" height="6" viewBox="0 0 9 6"><path d="M0.500 0.700l4 4 4-4" stroke="#444" stroke-width="1.100" fill="none"/></svg>
<div class="a d" style="left:634px;top:337px;letter-spacing:0.08px">Dr.</div>
<div class="a d" style="left:760px;top:337px;letter-spacing:0.07px">Mostrar información del paciente en la visita</div>
<div class="a cb" style="left:984px;top:336px"></div>
<svg style="left:986px;top:339px" width="9" height="8" viewBox="0 0 9 8"><path d="M0.500 3.800l2.800 3L8.500 0.800" stroke="#222" stroke-width="1.200" fill="none"/></svg>
<div class="a d" style="left:519px;top:362px;letter-spacing:-0.08px">Nombre:</div>
<div class="a" style="left:627px;top:357px;width:370px;height:21px;background:#fff;border:1px solid #7a7a7a"></div>
<div class="a d" style="left:633px;top:362px;letter-spacing:-0.02px">Juan</div>
<div class="a d" style="left:519px;top:386px;letter-spacing:0.07px">Apellidos:</div>
<div class="a" style="left:627px;top:381px;width:370px;height:21px;background:#fff;border:1px solid #7a7a7a"></div>
<div class="a d" style="left:633px;top:386px;letter-spacing:0.13px">De la cierva</div>
<!-- group Tipo de usuario -->
<div class="a" style="left:518px;top:416px;width:478px;height:50px;border:1px solid #d5dfe5"></div>
<div class="a d" style="left:523px;top:409px;background:#fff;padding:0 2px;letter-spacing:0.1px">Tipo de usuario</div>
<!-- group Privilegios -->
<div class="a" style="left:518px;top:479px;width:478px;height:124px;border:1px solid #d5dfe5"></div>
<div class="a d" style="left:523px;top:471px;background:#fff;padding:0 2px;letter-spacing:0.12px">Privilegios</div>
<div class="a cb" style="left:541px;top:436px"></div>
<div class="a d" style="left:560px;top:436px;font-weight:bold;letter-spacing:-0.06px">Administrador</div>
<div class="a cb" style="left:690px;top:436px"></div>
<svg style="left:692px;top:439px" width="9" height="8" viewBox="0 0 9 8"><path d="M0.500 3.800l2.800 3L8.500 0.800" stroke="#222" stroke-width="1.200" fill="none"/></svg>
<div class="a d" style="left:709px;top:436px;font-weight:bold;letter-spacing:0.1px">Recepción</div>
<div class="a cb" style="left:839px;top:436px"></div>
<svg style="left:841px;top:439px" width="9" height="8" viewBox="0 0 9 8"><path d="M0.500 3.800l2.800 3L8.500 0.800" stroke="#222" stroke-width="1.200" fill="none"/></svg>
<div class="a d" style="left:858px;top:436px;font-weight:bold;letter-spacing:-0.02px">Historias médicas</div>
<div class="a cb" style="left:541px;top:492px"></div>
<div class="a d" style="left:560px;top:492px;letter-spacing:-0.02px">Contabilidad</div>
<div class="a cb" style="left:690px;top:492px"></div>
<div class="a d" style="left:709px;top:492px;letter-spacing:0.05px">Facturación</div>
<div class="a cb" style="left:839px;top:492px"></div>
<svg style="left:841px;top:495px" width="9" height="8" viewBox="0 0 9 8"><path d="M0.500 3.800l2.800 3L8.500 0.800" stroke="#222" stroke-width="1.200" fill="none"/></svg>
<div class="a d" style="left:858px;top:492px;letter-spacing:0.08px">Multimedia</div>
<div class="a cb" style="left:541px;top:513px"></div>
<div class="a d" style="left:560px;top:513px;letter-spacing:0.01px">Contabilidad pacientes</div>
<div class="a cb" style="left:690px;top:513px"></div>
<div class="a d" style="left:709px;top:513px;letter-spacing:0.03px">Facturación pacientes</div>
<div class="a cb" style="left:839px;top:513px"></div>
<svg style="left:841px;top:516px" width="9" height="8" viewBox="0 0 9 8"><path d="M0.500 3.800l2.800 3L8.500 0.800" stroke="#222" stroke-width="1.200" fill="none"/></svg>
<div class="a d" style="left:858px;top:513px;letter-spacing:0.09px">Diseñador</div>
<div class="a cb" style="left:541px;top:534px"></div>
<div class="a d" style="left:560px;top:534px;letter-spacing:-0.06px">Presupuestos</div>
<div class="a cb" style="left:690px;top:534px"></div>
<svg style="left:692px;top:537px" width="9" height="8" viewBox="0 0 9 8"><path d="M0.500 3.800l2.800 3L8.500 0.800" stroke="#222" stroke-width="1.200" fill="none"/></svg>
<div class="a d" style="left:709px;top:534px;letter-spacing:-0.1px">Almacén</div>
<div class="a cb" style="left:839px;top:534px"></div>
<div class="a d" style="left:858px;top:534px;letter-spacing:-0.44px">CMBD</div>
<div class="a cb" style="left:541px;top:555px"></div>
<svg style="left:543px;top:558px" width="9" height="8" viewBox="0 0 9 8"><path d="M0.500 3.800l2.800 3L8.500 0.800" stroke="#222" stroke-width="1.200" fill="none"/></svg>
<div class="a d" style="left:560px;top:555px;letter-spacing:-0.1px">Caja día</div>
<div class="a cb" style="left:690px;top:555px"></div>
<svg style="left:692px;top:558px" width="9" height="8" viewBox="0 0 9 8"><path d="M0.500 3.800l2.800 3L8.500 0.800" stroke="#222" stroke-width="1.200" fill="none"/></svg>
<div class="a d" style="left:709px;top:555px;letter-spacing:-0.01px">Comisiones</div>
<div class="a cb" style="left:839px;top:555px"></div>
<svg style="left:841px;top:558px" width="9" height="8" viewBox="0 0 9 8"><path d="M0.500 3.800l2.800 3L8.500 0.800" stroke="#222" stroke-width="1.200" fill="none"/></svg>
<div class="a d" style="left:858px;top:555px;letter-spacing:-0.38px">CRM</div>
<div class="a cb" style="left:541px;top:576px"></div>
<svg style="left:543px;top:579px" width="9" height="8" viewBox="0 0 9 8"><path d="M0.500 3.800l2.800 3L8.500 0.800" stroke="#222" stroke-width="1.200" fill="none"/></svg>
<div class="a d" style="left:560px;top:576px;letter-spacing:0.01px">Exportador Excel</div>
<div class="a cb" style="left:690px;top:576px"></div>
<svg style="left:692px;top:579px" width="9" height="8" viewBox="0 0 9 8"><path d="M0.500 3.800l2.800 3L8.500 0.800" stroke="#222" stroke-width="1.200" fill="none"/></svg>
<div class="a d" style="left:709px;top:576px;letter-spacing:-0.07px">Configurador</div>
<!-- photo -->
<svg style="left:1037px;top:330px" width="138" height="199" viewBox="0 0 138 199">
<defs><filter id="bl" x="-10%" y="-10%" width="120%" height="120%"><feGaussianBlur stdDeviation="1.100"/></filter>
<filter id="bl2" x="-10%" y="-10%" width="120%" height="120%"><feGaussianBlur stdDeviation="3"/></filter>
<linearGradient id="bgp" x1="0" y1="0" x2="1" y2="0.150"><stop offset="0" stop-color="#504c48"/><stop offset="0.450" stop-color="#75706a"/><stop offset="1" stop-color="#8e9088"/></linearGradient>
<linearGradient id="fcg" x1="0" y1="0" x2="1" y2="0.300"><stop offset="0" stop-color="#ebcfc0"/><stop offset="0.550" stop-color="#d8ad98"/><stop offset="1" stop-color="#b07e6a"/></linearGradient>
<linearGradient id="ctg" x1="0" y1="0" x2="1" y2="0"><stop offset="0" stop-color="#f2f2ef"/><stop offset="0.700" stop-color="#e4e4e1"/><stop offset="1" stop-color="#c2c2c0"/></linearGradient>
<clipPath id="pc"><rect width="138" height="199"/></clipPath></defs>
<g clip-path="url(#pc)">
<rect width="138" height="199" fill="url(#bgp)"/>
<g filter="url(#bl2)">
<rect x="100.0" y="-2.7" width="42.7" height="29.3" fill="#a3a69c" />
<rect x="84.0" y="85.3" width="58.7" height="32.0" fill="#6d7d70" />
<rect x="89.3" y="114.7" width="53.3" height="45.3" fill="#c6ccba" />
<rect x="100.0" y="160.0" width="42.7" height="42.7" fill="#bcc6b6" />
</g><g filter="url(#bl)">
<rect x="80.0" y="50.7" width="44.0" height="34.7" fill="#dde4dc" />
<rect x="88.0" y="57.3" width="29.3" height="21.3" fill="#7c938a" />
<rect x="92.0" y="96.0" width="29.3" height="10.7" fill="#4a564c" />
<rect x="97.3" y="106.7" width="34.7" height="8.0" fill="#93a394" />
<polygon points="0.0,74.7 17.3,64.0 36.0,77.3 62.7,77.3 78.7,90.7 89.3,114.7 90.7,154.7 62.7,162.7 30.7,176.0 28.0,200.0 0.0,200.0" fill="url(#ctg)" />
<polygon points="0.0,101.3 12.0,138.7 20.0,200.0 0.0,200.0" fill="#f6f6f4" />
<polygon points="62.7,96.0 70.7,149.3 60.0,160.0 53.3,138.7" fill="#cfcfcd" />
<polygon points="81.3,117.3 89.3,128.0 89.3,154.7 73.3,160.0" fill="#d6d6d3" />
<polygon points="28.0,77.3 36.0,85.3 46.7,117.3 57.3,149.3 62.7,122.7 60.0,80.0 49.3,74.7" fill="#9ea3b2" />
<polygon points="27.5,76.0 37.3,89.3 45.3,81.3" fill="#b4bccb" />
<polygon points="60.5,77.3 52.5,88.5 61.3,94.7" fill="#a9b1c2" />
<polygon points="34.7,61.3 58.7,61.3 58.7,78.7 46.7,84.0 36.0,78.7" fill="#ab7c68" />
<ellipse cx="39.5" cy="42.7" rx="20.8" ry="25.3" fill="url(#fcg)" />
<path d="M14.1,40.0 C9.3,13.3 28.0,4.0 42.7,5.3 C54.7,5.9 64.0,14.7 62.1,32.0 C57.3,21.3 46.7,17.3 36.0,18.1 C25.3,18.7 20.0,26.7 18.7,42.7z" fill="#dcd7d0" opacity="0.920"/>
<path d="M22.7,38.7 L37.3,39.5 M41.9,39.5 L58.7,38.1" stroke="#4a3a36" stroke-width="1.300"/>
<rect x="25.3" y="36.0" width="12.0" height="8.0" fill="none" stroke="#5a4a46" stroke-width="0.700" rx="1.500"/>
<rect x="42.7" y="36.0" width="13.3" height="8.0" fill="none" stroke="#5a4a46" stroke-width="0.700" rx="1.500"/>
<path d="M32.0,57.3 Q40.0,60.8 49.3,56.5" stroke="#94604e" stroke-width="1.300" fill="none"/>
<ellipse cx="40.0" cy="49.3" rx="3.2" ry="4.3" fill="#c48a74" />
<polygon points="92.5,140.0 102.7,137.3 104.0,145.3 94.1,147.2" fill="#d9b3a2" />
<polygon points="30.1,188.8 60.5,163.2 133.6,152.5 136.8,160.0 108.5,193.3 31.2,197.3" fill="#26282c" />
<polygon points="52.5,189.9 76.5,166.4 128.0,157.3 105.9,186.1" fill="#bcb9ce" />
<path d="M28.0,176.0 C30.7,162.7 49.3,156.0 70.7,160.0 L77.3,165.3 L62.7,180.0 L36.0,188.0 L28.5,186.7z" fill="#c9a08a"/>
<path d="M54.7,154.7 L82.7,164.3" stroke="#26262a" stroke-width="1.600"/>
</g>
<rect x="0" y="0" width="138" height="1.200" fill="#34457a" opacity="0.700"/>
<rect x="136.800" y="0" width="1.200" height="199" fill="#34457a" opacity="0.600"/>
<rect x="0" y="197" width="138" height="2" fill="#33438a" opacity="0.900"/>
</g></svg>
<div class="a d" style="left:1015px;top:541px;letter-spacing:-0.09px">Creado:</div>
<div class="a d" style="left:1085px;top:541px;letter-spacing:-0.2px">14/12/2017</div>
<div class="a d" style="left:1015px;top:560px;letter-spacing:0.06px">Actualizado:</div>
<div class="a d" style="left:1085px;top:560px;letter-spacing:-0.2px">28/09/2018</div>
<div class="a cb" style="left:1013px;top:582px"></div>
<div class="a" style="left:1030px;top:581px;width:95px;height:14px;border:1px dotted #000"></div>
<div class="a d" style="left:1032px;top:582px;height:12px;overflow:hidden;line-height:13px;letter-spacing:-0.08px">Acceso denegado</div>
<div class="a d" style="left:1179px;top:582px;color:#8a8a8a;letter-spacing:-0.03px">ID: 16</div>

</body></html>
